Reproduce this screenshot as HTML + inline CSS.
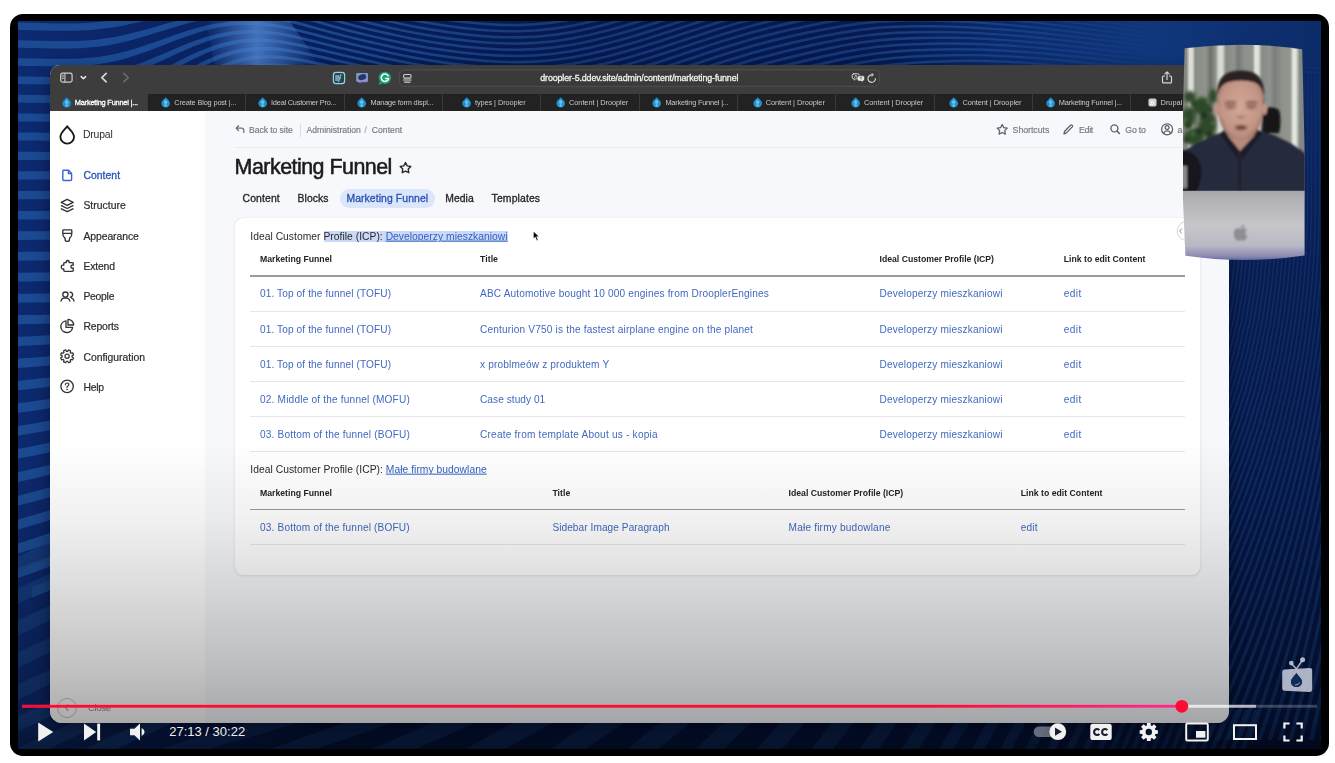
<!DOCTYPE html>
<html lang="en">
<head>
<meta charset="utf-8">
<title>Marketing Funnel | Droopler - video player</title>
<style>
*{box-sizing:border-box;margin:0;padding:0}
html,body{width:1335px;height:763px;overflow:hidden;background:#fff}
body{position:relative;font-family:"Liberation Sans",sans-serif;color:#222;-webkit-font-smoothing:antialiased}
.abs{position:absolute}
.pg{position:absolute;width:1335px;height:763px}
.t{position:absolute;white-space:nowrap;line-height:1;transform:translateY(calc(-50% + .8px))}
a{color:inherit;text-decoration:none}
#player{position:absolute;left:10px;top:14px;width:1319px;height:742px;background:#000;border-radius:13px;overflow:hidden}
#video{position:absolute;left:8px;top:6.5px;width:1303px;height:728.5px;overflow:hidden;background:#0a2463}
#video>.pg{left:-18px;top:-20.5px}
#browser{filter:blur(.35px);position:absolute;left:50px;top:65px;width:1179px;height:658.4px;box-shadow:0 6px 16px rgba(0,0,10,.45);border-radius:10px 10px 12px 12px;overflow:hidden;background:#fafafd}
#browser>.pg{left:-50px;top:-65px}
#toolbar{left:50px;top:65px;width:1179px;height:29px;background:#3d3d3d}
#tabs{left:48.7px;top:93.5px;width:1182px;height:17.7px;background:#222;display:flex;padding-left:0}
.tab{width:98.35px;height:17.7px;flex:none;display:flex;align-items:center;justify-content:center;color:#c9c9c9;font-size:7.4px;font-weight:400;border-left:1px solid #3a3a3a;white-space:nowrap;padding-left:4px}
.tab.on{background:#3d3d3d;color:#fff;-webkit-text-stroke:.3px #fff;border-left:none}
.tab svg{width:9.4px;height:10.6px;margin-right:3.6px;flex:none}
#side{left:50px;top:111px;width:155px;height:612px;background:#fff}
#main{left:205px;top:111px;width:1024px;height:612px;background:#f7f8fc}
.nav{font-size:10.4px;color:#2b2b2b;left:83.4px;-webkit-text-stroke:.2px #2b2b2b}
.nav.on{color:#2a55b8;-webkit-text-stroke:.3px #2a55b8}
.crumb{font-size:8.6px;color:#75777e;-webkit-text-stroke:.15px #75777e}
.tool{font-size:8.8px;color:#75777e;-webkit-text-stroke:.15px #75777e}
h1.t{font-size:21.4px;font-weight:400;color:#1b1b1d;-webkit-text-stroke:0.55px #1b1b1d}
.ltab{font-size:10.4px;color:#1f1f22;-webkit-text-stroke:0.3px #1f1f22}
.ltab.on{color:#2a50b4;-webkit-text-stroke:0.3px #2a50b4}
#pill{left:339.6px;top:188.5px;width:95px;height:19.3px;border-radius:10px;background:#dbe6fb}
#card{left:235px;top:218px;width:965px;height:357px;border-radius:8px;background:#fff;box-shadow:0 1px 3px rgba(30,30,60,.10),0 0 1px rgba(30,30,60,.15)}
.cap{font-size:10.3px;color:#2a2a2d}
.cap a{color:#3362c4;text-decoration:underline}
.th{font-size:8.7px;font-weight:700;color:#232326}
.td{font-size:10.1px;color:#4169c0}
.hl{position:absolute;height:1.5px;background:#9b9b9e}
.rl{position:absolute;height:1px;background:#e6e6ea}
#shade{left:18px;top:440px;width:1303px;height:309px;background:linear-gradient(to bottom,rgba(0,0,0,0) 0%,rgba(0,0,0,.055) 25%,rgba(0,0,0,.145) 50%,rgba(0,0,0,.245) 75%,rgba(0,0,0,.33) 91%,rgba(0,0,0,.52) 100%)}
#time{font-size:13px;color:#eee;left:169.2px;top:731px}
#r00{letter-spacing:0.110px}
#r01{letter-spacing:0.158px}
#r02{letter-spacing:0.173px}
#r03{letter-spacing:0.430px}
#r10{letter-spacing:0.110px}
#r11{letter-spacing:0.176px}
#r12{letter-spacing:0.173px}
#r13{letter-spacing:0.430px}
#r20{letter-spacing:0.110px}
#r21{letter-spacing:0.175px}
#r22{letter-spacing:0.173px}
#r23{letter-spacing:0.430px}
#r30{letter-spacing:0.188px}
#r31{letter-spacing:0.059px}
#r32{letter-spacing:0.173px}
#r33{letter-spacing:0.430px}
#r40{letter-spacing:0.169px}
#r41{letter-spacing:0.211px}
#r42{letter-spacing:0.173px}
#r43{letter-spacing:0.430px}
#tb0{letter-spacing:-0.202px}
#tb1{letter-spacing:-0.161px}
#tb2{letter-spacing:-0.231px}
#tb3{letter-spacing:-0.203px}
#tb4{letter-spacing:-0.090px}
#tb5{letter-spacing:-0.065px}
#tb6{letter-spacing:-0.202px}
#tb7{letter-spacing:-0.065px}
#tb8{letter-spacing:-0.065px}
#tb9{letter-spacing:-0.065px}
#tb10{letter-spacing:-0.202px}
#brand{letter-spacing:-0.185px}
#n0{letter-spacing:0.042px}
#n1{letter-spacing:0.027px}
#n2{letter-spacing:-0.065px}
#n3{letter-spacing:-0.143px}
#n4{letter-spacing:-0.260px}
#n5{letter-spacing:-0.142px}
#n6{letter-spacing:-0.016px}
#n7{letter-spacing:-0.269px}
#c0{letter-spacing:-0.060px}
#c1{letter-spacing:-0.018px}
#c2{letter-spacing:0.042px}
#s0{letter-spacing:-0.052px}
#s1{letter-spacing:-0.293px}
#s2{letter-spacing:-0.203px}
#h1{letter-spacing:-0.499px}
#l0{letter-spacing:0.142px}
#l1{letter-spacing:0.065px}
#l2{letter-spacing:0.095px}
#l3{letter-spacing:0.037px}
#l4{letter-spacing:0.138px}
#cap1{letter-spacing:0.028px}
#cap2{letter-spacing:0.035px}
#h10{letter-spacing:-0.001px}
#h11{letter-spacing:0.059px}
#h12{letter-spacing:-0.014px}
#h13{letter-spacing:0.012px}
#h20{letter-spacing:-0.001px}
#h21{letter-spacing:0.059px}
#h22{letter-spacing:-0.014px}
#h23{letter-spacing:0.012px}
#r50{letter-spacing:0.163px}
#r51{letter-spacing:0.070px}
#r52{letter-spacing:0.186px}
#r53{letter-spacing:0.230px}
#url{letter-spacing:-0.129px}
#time{letter-spacing:0.007px}
#cls{letter-spacing:-0.346px}
</style>
</head>
<body>
<div id="player">
 <div id="video"><div class="pg">
  <svg class="abs" style="left:18px;top:20px" width="1303" height="730" viewBox="18 20 1303 730"><defs><linearGradient id="bgv" x1="0" y1="0" x2="0" y2="1"><stop offset="0" stop-color="#081f5c"/><stop offset=".5" stop-color="#081c52"/><stop offset="1" stop-color="#051440"/></linearGradient><linearGradient id="rbase" x1="0" y1="0" x2="0" y2="1"><stop offset="0" stop-color="#0d2c6c" stop-opacity="0"/><stop offset=".09" stop-color="#0c2868" stop-opacity="1"/><stop offset=".35" stop-color="#081c50"/><stop offset="1" stop-color="#04123a"/></linearGradient><linearGradient id="lbase" x1="0" y1="0" x2="1" y2="0"><stop offset="0" stop-color="#0e2b72" stop-opacity=".9"/><stop offset=".25" stop-color="#0e2b72" stop-opacity=".6"/><stop offset="1" stop-color="#0e2b72" stop-opacity="0"/></linearGradient><linearGradient id="mdark" x1="0" y1="0" x2="1" y2="0"><stop offset="0" stop-color="#020a30" stop-opacity="0"/><stop offset=".4" stop-color="#020a30" stop-opacity=".28"/><stop offset=".8" stop-color="#020a30" stop-opacity=".28"/><stop offset="1" stop-color="#020a30" stop-opacity="0"/></linearGradient><linearGradient id="sheen" x1="0" y1="0" x2="1" y2="0"><stop offset="0" stop-color="#4c80cc" stop-opacity="0"/><stop offset=".45" stop-color="#4c80cc" stop-opacity=".85"/><stop offset="1" stop-color="#4c80cc" stop-opacity="0"/></linearGradient><linearGradient id="rfade" x1="0" y1="0" x2="1" y2="0"><stop offset="0" stop-color="#10357a" stop-opacity="0"/><stop offset=".5" stop-color="#10357a" stop-opacity="0"/><stop offset=".66" stop-color="#10357a" stop-opacity=".6"/><stop offset=".8" stop-color="#10377c" stop-opacity=".97"/><stop offset="1" stop-color="#0c2b6a" stop-opacity="1"/></linearGradient></defs><rect x="18" y="20" width="1303" height="730" fill="url(#bgv)"/><rect x="18" y="20" width="300" height="730" fill="url(#lbase)"/><path fill="#1b4a92" d="M14,-173 20,-172.8 26,-172.6 32,-172.4 38,-172.1 44,-171.7 50,-171.4 56,-171.1 62,-170.8 62,-163.4 56,-163.7 50,-164 44,-164.3 38,-164.6 32,-164.9 26,-165.2 20,-165.4 14,-165.5ZM14,-155.2 20,-155.1 26,-154.9 32,-154.6 38,-154.3 44,-154 50,-153.7 56,-153.4 62,-153.1 62,-145.7 56,-146 50,-146.3 44,-146.6 38,-146.9 32,-147.2 26,-147.4 20,-147.6 14,-147.7ZM14,-137.4 20,-137.3 26,-137.1 32,-136.9 38,-136.6 44,-136.3 50,-136 56,-135.7 62,-135.5 62,-128.1 56,-128.3 50,-128.6 44,-128.9 38,-129.2 32,-129.4 26,-129.6 20,-129.8 14,-130ZM14,-119.7 20,-119.5 26,-119.3 32,-119.1 38,-118.9 44,-118.6 50,-118.3 56,-118 62,-117.8 62,-110.4 56,-110.6 50,-110.9 44,-111.2 38,-111.4 32,-111.7 26,-111.9 20,-112.1 14,-112.2ZM14,-101.9 20,-101.8 26,-101.6 32,-101.4 38,-101.2 44,-100.9 50,-100.6 56,-100.4 62,-100.2 62,-92.8 56,-93 50,-93.2 44,-93.4 38,-93.7 32,-93.9 26,-94.1 20,-94.3 14,-94.4ZM500,11.3 518,11.5 524,11.3 524,13.9 518,14.1 500,13.9ZM14,-84.1 20,-84 26,-83.8 32,-83.6 38,-83.4 44,-83.2 50,-82.9 56,-82.7 62,-82.5 62,-75.1 56,-75.3 50,-75.5 44,-75.7 38,-76 32,-76.2 26,-76.4 20,-76.5 14,-76.7ZM440,11.2 446,12.1 464,14.5 482,16.4 500,17.5 518,17.6 536,16.7 554,14.7 572,11.8 578,10.5 578,13.2 572,14.4 554,17.4 536,19.3 518,20.2 500,20.1 482,19 464,17.1 446,14.7 440,13.8ZM14,-66.4 20,-66.2 26,-66.1 32,-65.9 38,-65.7 44,-65.5 50,-65.2 56,-65 62,-64.9 62,-57.4 56,-57.6 50,-57.8 44,-58 38,-58.3 32,-58.5 26,-58.6 20,-58.8 14,-58.9ZM404,10.8 410,12 428,15.4 446,18.3 464,20.7 482,22.5 500,23.6 518,23.8 536,22.9 554,21 572,18.1 590,14.2 602,11.2 602,13.9 590,16.9 572,20.8 554,23.7 536,25.6 518,26.4 500,26.2 482,25.1 464,23.3 446,20.9 428,18 410,14.6 404,13.4ZM14,-48.6 20,-48.5 26,-48.3 32,-48.2 38,-48 44,-47.7 50,-47.5 56,-47.3 62,-47.2 62,-39.8 56,-39.9 50,-40.1 44,-40.3 38,-40.5 32,-40.7 26,-40.9 20,-41 14,-41.1ZM374,10.3 380,11.7 386,13.1 392,14.4 398,15.7 410,18.2 428,21.6 446,24.5 464,26.8 482,28.7 500,29.8 518,30 536,29.2 554,27.3 572,24.4 590,20.6 608,16.1 626,10.9 626,13.7 608,18.8 590,23.3 572,27.1 554,29.9 536,31.8 518,32.6 500,32.3 482,31.2 464,29.4 446,27.1 428,24.2 410,20.9 398,18.4 392,17.1 386,15.7 380,14.3 374,12.9ZM1286,12.4 1292,13.1 1310,15.1 1328,16.3 1328,17.7 1310,16.6 1292,14.6 1286,13.9ZM14,-30.8 20,-30.7 26,-30.6 32,-30.4 38,-30.2 44,-30 50,-29.8 56,-29.7 62,-29.5 62,-22.1 56,-22.2 50,-22.4 44,-22.6 38,-22.8 32,-23 26,-23.1 20,-23.2 14,-23.3ZM350,10.4 356,12.1 362,13.6 368,15.1 374,16.6 380,18 386,19.3 392,20.7 398,22 410,24.5 428,27.8 446,30.6 464,33 482,34.8 500,35.9 518,36.1 536,35.4 554,33.6 572,30.8 590,27 608,22.5 626,17.4 644,12 650,10.2 650,12.9 644,14.8 626,20.2 608,25.2 590,29.7 572,33.4 554,36.2 536,38 518,38.7 500,38.5 482,37.4 464,35.6 446,33.2 428,30.4 410,27.1 398,24.6 392,23.3 386,22 380,20.6 374,19.2 368,17.7 362,16.3 356,14.7 350,13.1ZM1256,12.2 1274,14.5 1292,16.7 1310,18.6 1328,19.8 1328,21.3 1310,20.1 1292,18.2 1274,16 1256,13.7ZM14,-13 20,-12.9 26,-12.8 32,-12.7 38,-12.5 44,-12.3 50,-12.1 56,-12 62,-11.9 62,-4.5 56,-4.6 50,-4.7 44,-4.9 38,-5.1 32,-5.2 26,-5.4 20,-5.5 14,-5.6ZM326,9.8 332,11.6 338,13.4 344,15.2 350,16.8 356,18.4 362,19.9 368,21.4 374,22.8 380,24.2 386,25.6 392,26.9 398,28.2 410,30.7 428,34 446,36.8 464,39.1 482,40.9 500,42.1 518,42.3 536,41.6 554,39.9 572,37.1 590,33.4 608,29 626,24 644,18.6 662,12.9 668,11 668,13.8 662,15.7 644,21.3 626,26.7 608,31.7 590,36.1 572,39.8 554,42.5 536,44.2 518,44.9 500,44.6 482,43.5 464,41.7 446,39.4 428,36.6 410,33.3 398,30.8 392,29.5 386,28.2 380,26.8 374,25.5 368,24 362,22.6 356,21 350,19.5 344,17.9 338,16.2 332,14.4 326,12.6ZM1226,12.2 1238,13.7 1256,15.9 1274,18.2 1292,20.3 1310,22.2 1328,23.3 1328,24.8 1310,23.7 1292,21.8 1274,19.7 1256,17.5 1238,15.3 1226,13.8ZM14,4.7 20,4.8 26,4.9 32,5.1 38,5.2 44,5.4 50,5.5 56,5.7 62,5.8 62,13.2 56,13.1 50,13 44,12.8 38,12.7 32,12.5 26,12.4 20,12.3 14,12.2ZM308,10.9 314,12.7 320,14.5 326,16.4 332,18.2 338,19.9 344,21.6 350,23.2 356,24.7 362,26.2 368,27.7 374,29.1 380,30.5 386,31.8 392,33.1 398,34.4 410,36.9 428,40.2 446,43 464,45.3 482,47.1 500,48.2 518,48.5 536,47.8 554,46.1 572,43.5 590,39.8 608,35.4 626,30.5 644,25.1 662,19.5 680,13.7 692,9.9 692,12.6 680,16.4 662,22.2 644,27.9 626,33.2 608,38.1 590,42.5 572,46.1 554,48.8 536,50.4 518,51.1 500,50.8 482,49.6 464,47.9 446,45.6 428,42.8 410,39.5 398,37 392,35.8 386,34.4 380,33.1 374,31.7 368,30.3 362,28.9 356,27.4 350,25.8 344,24.3 338,22.6 332,20.9 326,19.1 320,17.3 314,15.5 308,13.7ZM1190,11.7 1202,13.1 1220,15.3 1238,17.5 1256,19.6 1274,21.8 1292,23.9 1310,25.7 1328,26.9 1328,28.3 1310,27.2 1292,25.5 1274,23.4 1256,21.2 1238,19.1 1220,16.9 1202,14.8 1190,13.3ZM14,22.5 20,22.6 26,22.7 32,22.8 38,22.9 44,23.1 50,23.2 56,23.4 62,23.4 68,23.4 74,23.4 80,23.2 86,23 92,22.6 98,22.1 104,21.4 110,20.6 116,19.8 122,18.8 128,17.7 134,16.5 140,15.2 146,13.9 152,12.6 158,11.3 164,10 170,8.7 176,7.6 176,13.2 170,14.6 164,16 158,17.5 152,18.9 146,20.4 140,21.9 134,23.3 128,24.6 122,25.8 116,26.9 110,27.8 104,28.6 98,29.3 92,29.9 86,30.3 80,30.6 74,30.8 68,30.8 62,30.8 56,30.8 50,30.7 44,30.5 38,30.4 32,30.3 26,30.1 20,30 14,30ZM278,9.7 284,11.1 290,12.7 296,14.3 302,16 308,17.7 314,19.4 320,21.2 326,22.9 332,24.7 338,26.3 344,28 350,29.5 356,31 362,32.5 368,33.9 374,35.4 380,36.7 386,38.1 392,39.4 398,40.7 410,43.1 428,46.4 446,49.1 464,51.4 482,53.2 500,54.3 518,54.7 536,54.1 554,52.4 572,49.8 590,46.2 608,41.9 626,37 644,31.6 662,26 680,20.2 698,14.5 710,10.7 710,13.4 698,17.2 680,23 662,28.8 644,34.4 626,39.7 608,44.6 590,48.9 572,52.5 554,55.1 536,56.7 518,57.3 500,56.9 482,55.8 464,54 446,51.7 428,49 410,45.7 398,43.3 392,42 386,40.7 380,39.3 374,38 368,36.6 362,35.2 356,33.7 350,32.2 344,30.7 338,29.1 332,27.4 326,25.7 320,24 314,22.3 308,20.6 302,18.9 296,17.2 290,15.7 284,14.2 278,12.8ZM1160,11.9 1166,12.7 1184,14.9 1202,17 1220,19.1 1238,21.3 1256,23.4 1274,25.5 1292,27.6 1310,29.3 1328,30.4 1328,31.9 1310,30.8 1292,29.1 1274,27 1256,24.9 1238,22.9 1220,20.8 1202,18.7 1184,16.6 1166,14.4 1160,13.6ZM14,40.3 20,40.3 26,40.4 32,40.5 38,40.7 44,40.8 50,40.9 56,41 62,41.1 68,41.1 74,41 80,40.8 86,40.5 92,40 98,39.4 104,38.6 110,37.7 116,36.7 122,35.5 128,34.1 134,32.6 140,31.1 146,29.4 152,27.7 158,26 164,24.3 170,22.6 176,21 182,19.5 188,18 194,16.7 200,15.5 206,14.4 212,13.6 218,13 224,12.5 230,12.3 236,12.2 242,12.4 248,12.7 254,13.3 260,14 266,14.9 272,15.9 278,17.1 284,18.4 290,19.8 296,21.3 302,22.9 308,24.5 314,26.2 320,27.9 326,29.5 332,31.2 338,32.8 344,34.4 350,35.9 356,37.4 362,38.8 368,40.2 374,41.6 380,43 386,44.3 392,45.6 398,46.9 410,49.3 428,52.6 446,55.3 464,57.6 482,59.3 500,60.5 518,60.8 536,60.3 554,58.7 572,56.1 590,52.6 608,48.3 626,43.5 644,38.2 662,32.6 680,26.7 698,20.9 716,15.3 734,9.9 734,12.6 716,18 698,23.7 680,29.5 662,35.3 644,40.9 626,46.2 608,51.1 590,55.3 572,58.8 554,61.3 536,62.9 518,63.4 500,63.1 482,61.9 464,60.2 446,57.9 428,55.2 410,51.9 398,49.5 392,48.2 386,46.9 380,45.6 374,44.2 368,42.9 362,41.5 356,40 350,38.6 344,37.1 338,35.5 332,33.9 326,32.3 320,30.7 314,29 308,27.4 302,25.8 296,24.3 290,22.8 284,21.4 278,20.2 272,19.1 266,18.2 260,17.4 254,16.7 248,16.3 242,16.1 236,16 230,16.2 224,16.6 218,17.3 212,18.1 206,19.1 200,20.3 194,21.7 188,23.2 182,24.9 176,26.7 170,28.5 164,30.4 158,32.2 152,34.1 146,36 140,37.7 134,39.4 128,41 122,42.5 116,43.8 110,44.9 104,45.9 98,46.7 92,47.3 86,47.8 80,48.2 74,48.4 68,48.5 62,48.5 56,48.5 50,48.4 44,48.2 38,48.1 32,48 26,47.9 20,47.8 14,47.7ZM1130,11.9 1148,14.4 1166,16.7 1184,18.9 1202,20.9 1220,23 1238,25.1 1256,27.1 1274,29.2 1292,31.2 1310,32.9 1328,33.9 1328,35.4 1310,34.4 1292,32.7 1274,30.7 1256,28.7 1238,26.7 1220,24.6 1202,22.6 1184,20.5 1166,18.4 1148,16.1 1130,13.7ZM14,58.2 20,58.2 26,58.3 32,58.4 38,58.5 44,58.7 50,58.8 56,58.8 62,58.9 68,58.8 74,58.7 80,58.5 86,58.1 92,57.6 98,56.9 104,56 110,54.9 116,53.7 122,52.3 128,50.7 134,48.9 140,47.1 146,45.1 152,43 158,40.9 164,38.8 170,36.7 176,34.6 182,32.5 188,30.6 194,28.8 200,27.1 206,25.6 212,24.3 218,23.3 224,22.4 230,21.8 236,21.4 242,21.2 248,21.3 254,21.6 260,22.1 266,22.7 272,23.6 278,24.6 284,25.7 290,27 296,28.4 302,29.9 308,31.4 314,33 320,34.6 326,36.2 332,37.7 338,39.3 344,40.8 350,42.3 356,43.7 362,45.2 368,46.6 374,47.9 380,49.3 386,50.6 392,51.9 398,53.2 410,55.6 428,58.8 446,61.5 464,63.8 482,65.5 500,66.7 518,67.1 536,66.5 554,65 572,62.5 590,59.1 608,54.9 626,50 644,44.8 662,39.1 680,33.3 698,27.5 716,21.8 734,16.4 752,11.3 758,9.8 758,12.4 752,14 734,19.1 716,24.5 698,30.2 680,36.1 662,41.9 644,47.6 626,52.8 608,57.6 590,61.8 572,65.2 554,67.7 536,69.2 518,69.7 500,69.3 482,68.1 464,66.4 446,64.2 428,61.4 410,58.2 398,55.8 392,54.5 386,53.3 380,51.9 374,50.6 368,49.2 362,47.8 356,46.4 350,45 344,43.5 338,42.1 332,40.5 326,39 320,37.4 314,35.8 308,34.3 302,32.8 296,31.4 290,30 284,28.8 278,27.7 272,26.8 266,26 260,25.4 254,25.1 248,24.9 242,25 236,25.3 230,25.8 224,26.6 218,27.6 212,28.9 206,30.3 200,32 194,33.9 188,35.9 182,38.1 176,40.3 170,42.6 164,44.9 158,47.2 152,49.5 146,51.7 140,53.8 134,55.8 128,57.7 122,59.4 116,60.9 110,62.2 104,63.3 98,64.3 92,65 86,65.6 80,66 74,66.2 68,66.3 62,66.4 56,66.4 50,66.3 44,66.2 38,66.1 32,66 26,65.9 20,65.8 14,65.8ZM1100,11.8 1112,13.5 1130,16.1 1148,18.5 1166,20.8 1184,22.9 1202,24.9 1220,26.9 1238,28.9 1256,30.9 1274,32.9 1292,34.8 1310,36.5 1328,37.5 1328,39 1310,38 1292,36.4 1274,34.4 1256,32.5 1238,30.5 1220,28.5 1202,26.6 1184,24.6 1166,22.5 1148,20.3 1130,17.9 1112,15.3 1100,13.6ZM14,76.3 20,76.4 26,76.5 32,76.6 38,76.7 44,76.8 50,76.9 56,76.9 62,76.9 62,84.6 56,84.6 50,84.5 44,84.4 38,84.3 32,84.2 26,84.2 20,84.1 14,84ZM110,72.4 116,71 122,69.3 128,67.5 134,65.5 140,63.3 146,61 152,58.6 158,56 164,53.5 170,50.9 176,48.3 182,45.8 188,43.4 194,41.1 200,38.9 206,37 212,35.2 218,33.7 224,32.5 230,31.4 236,30.7 242,30.2 248,30 254,30 260,30.2 266,30.7 272,31.3 278,32.1 284,33.1 290,34.3 296,35.6 302,36.9 308,38.4 314,39.9 320,41.4 326,42.9 332,44.4 338,45.9 344,47.4 350,48.8 356,50.2 362,51.6 368,53 374,54.3 380,55.7 386,57 392,58.3 398,59.5 410,61.9 428,65.1 446,67.8 464,70 482,71.8 488,72.2 488,74.9 482,74.4 464,72.7 446,70.5 428,67.8 410,64.6 398,62.2 392,61 386,59.7 380,58.4 374,57 368,55.7 362,54.3 356,52.9 350,51.5 344,50.1 338,48.7 332,47.2 326,45.7 320,44.3 314,42.8 308,41.3 302,39.9 296,38.6 290,37.4 284,36.3 278,35.3 272,34.6 266,34 260,33.7 254,33.5 248,33.6 242,34 236,34.6 230,35.5 224,36.7 218,38.1 212,39.8 206,41.8 200,43.9 194,46.3 188,48.8 182,51.4 176,54.1 170,56.9 164,59.7 158,62.4 152,65.1 146,67.7 140,70.2 134,72.5 128,74.6 122,76.6 116,78.3 110,79.8ZM548,72 554,71.5 572,69 590,65.6 608,61.5 626,56.7 644,51.5 662,45.8 680,40 698,34.1 716,28.3 734,22.9 752,17.8 770,13.2 782,10.5 782,13.2 770,15.9 752,20.5 734,25.6 716,31.1 698,36.9 680,42.8 662,48.7 644,54.3 626,59.5 608,64.3 590,68.4 572,71.7 554,74.2 548,74.8ZM1070,11.9 1076,12.8 1094,15.3 1112,17.9 1130,20.4 1148,22.7 1166,24.9 1184,26.9 1202,28.9 1220,30.8 1238,32.8 1256,34.7 1274,36.6 1292,38.5 1310,40.1 1328,41.1 1328,42.6 1310,41.6 1292,40.1 1274,38.2 1256,36.3 1238,34.4 1220,32.5 1202,30.6 1184,28.7 1166,26.7 1148,24.5 1130,22.2 1112,19.7 1094,17.1 1076,14.6 1070,13.8ZM14,94.8 20,94.8 26,94.9 32,95 38,95 44,95.1 50,95.2 56,95.2 62,95.2 62,103 56,103 50,103 44,102.9 38,102.8 32,102.8 26,102.7 20,102.6 14,102.6ZM152,74.3 158,71.4 164,68.4 170,65.3 176,62.3 182,59.3 188,56.3 194,53.5 200,50.9 206,48.5 212,46.3 218,44.3 224,42.6 230,41.2 236,40.1 242,39.3 248,38.8 254,38.5 260,38.5 266,38.7 272,39.2 278,39.8 284,40.7 290,41.7 296,42.9 302,44.1 308,45.5 314,46.9 320,48.3 326,49.7 332,51.2 338,52.6 344,54 350,55.4 356,56.8 362,58.1 368,59.5 374,60.8 380,62.2 386,63.5 392,64.7 398,66 410,68.4 428,71.5 434,72.5 434,75.2 428,74.3 410,71.1 398,68.7 392,67.5 386,66.2 380,64.9 374,63.6 368,62.2 362,60.9 356,59.6 350,58.2 344,56.8 338,55.4 332,54 326,52.6 320,51.2 314,49.8 308,48.5 302,47.2 296,46 290,44.9 284,43.9 278,43.1 272,42.5 266,42.1 260,42 254,42.1 248,42.5 242,43.1 236,44.1 230,45.4 224,46.9 218,48.8 212,50.9 206,53.3 200,56 194,58.8 188,61.8 182,65 176,68.2 170,71.4 164,74.7 158,77.9 152,81ZM590,72.3 608,68.2 626,63.5 644,58.3 662,52.6 680,46.7 698,40.8 716,35 734,29.5 752,24.4 770,19.7 788,15.6 806,11.9 812,10.8 812,13.5 806,14.6 788,18.3 770,22.5 752,27.1 734,32.3 716,37.8 698,43.6 680,49.6 662,55.5 644,61.1 626,66.3 608,71 590,75.1ZM1034,11.9 1040,12.6 1058,14.9 1076,17.3 1094,19.7 1112,22.2 1130,24.7 1148,27 1166,29.1 1184,31.1 1202,33 1220,34.8 1238,36.7 1256,38.6 1274,40.4 1292,42.3 1310,43.8 1328,44.8 1328,46.3 1310,45.4 1292,43.8 1274,42 1256,40.2 1238,38.4 1220,36.5 1202,34.7 1184,32.8 1166,30.9 1148,28.8 1130,26.5 1112,24.1 1094,21.6 1076,19.2 1058,16.8 1040,14.6 1034,13.9ZM14,113.5 20,113.5 26,113.6 32,113.6 38,113.7 44,113.8 50,113.8 56,113.9 62,113.8 62,121.7 56,121.7 50,121.7 44,121.7 38,121.6 32,121.5 26,121.5 20,121.4 14,121.4ZM182,72.9 188,69.5 194,66.2 200,63.1 206,60.1 212,57.5 218,55.1 224,53 230,51.2 236,49.7 242,48.5 248,47.7 254,47.1 260,46.9 266,46.9 272,47.1 278,47.6 284,48.3 290,49.2 296,50.3 302,51.4 308,52.7 314,54 320,55.3 326,56.6 332,58 338,59.4 344,60.7 350,62.1 356,63.4 362,64.8 368,66.1 374,67.4 380,68.7 386,70 392,71.3 398,72.5 398,75.3 392,74.1 386,72.8 380,71.5 374,70.2 368,68.9 362,67.6 356,66.2 350,64.9 344,63.6 338,62.3 332,60.9 326,59.6 320,58.3 314,57 308,55.7 302,54.5 296,53.4 290,52.4 284,51.6 278,50.9 272,50.5 266,50.3 260,50.4 254,50.8 248,51.4 242,52.4 236,53.7 230,55.4 224,57.3 218,59.6 212,62.2 206,65.1 200,68.2 194,71.5 188,75.1 182,78.7ZM614,73.5 626,70.3 644,65.1 662,59.5 680,53.6 698,47.6 716,41.8 734,36.2 752,31 770,26.3 788,22.1 806,18.4 824,15 842,12.2 848,11.4 848,13.9 842,14.8 824,17.7 806,21.1 788,24.9 770,29.1 752,33.8 734,39 716,44.6 698,50.5 680,56.5 662,62.4 644,68.1 626,73.2 614,76.4ZM986,11.8 1004,13.5 1022,15.4 1040,17.3 1058,19.5 1076,21.8 1094,24.2 1112,26.7 1130,29.1 1148,31.3 1166,33.4 1184,35.3 1202,37.1 1220,38.9 1238,40.7 1256,42.5 1274,44.3 1292,46.1 1310,47.6 1328,48.5 1328,50 1310,49.1 1292,47.7 1274,45.9 1256,44.2 1238,42.4 1220,40.6 1202,38.8 1184,37 1166,35.2 1148,33.1 1130,30.9 1112,28.6 1094,26.1 1076,23.8 1058,21.5 1040,19.3 1022,17.4 1004,15.6 986,13.9ZM14,132.5 20,132.5 26,132.5 32,132.6 38,132.6 44,132.7 50,132.7 56,132.7 62,132.7 62,140.6 56,140.7 50,140.7 44,140.7 38,140.6 32,140.6 26,140.5 20,140.5 14,140.5ZM200,75.4 206,72 212,68.8 218,66 224,63.5 230,61.2 236,59.4 242,57.9 248,56.7 254,55.9 260,55.4 266,55.2 272,55.2 278,55.6 284,56.1 290,56.9 296,57.8 302,58.8 308,59.9 314,61.2 320,62.4 326,63.7 332,65 338,66.3 344,67.6 350,68.9 356,70.2 362,71.5 368,72.8 368,75.6 362,74.3 356,73 350,71.8 344,70.5 338,69.2 332,67.9 326,66.6 320,65.4 314,64.2 308,63 302,61.9 296,60.9 290,60.1 284,59.4 278,58.9 272,58.6 266,58.7 260,59 254,59.6 248,60.5 242,61.8 236,63.5 230,65.5 224,67.9 218,70.6 212,73.6 206,77 200,80.6ZM644,72.1 662,66.5 680,60.5 698,54.5 716,48.6 734,43 752,37.8 770,33 788,28.8 806,24.9 824,21.4 842,18.4 860,16 878,14.4 896,13.6 914,13.5 932,13.8 950,14.5 968,15.5 986,16.9 1004,18.4 1022,20.2 1040,22.1 1058,24.2 1076,26.5 1094,28.8 1112,31.2 1130,33.5 1148,35.7 1166,37.7 1184,39.5 1202,41.3 1220,43 1238,44.7 1256,46.5 1274,48.2 1292,49.9 1310,51.4 1328,52.2 1328,53.8 1310,53 1292,51.5 1274,49.9 1256,48.2 1238,46.5 1220,44.7 1202,43 1184,41.3 1166,39.5 1148,37.5 1130,35.4 1112,33.1 1094,30.7 1076,28.4 1058,26.2 1040,24.1 1022,22.2 1004,20.5 986,19 968,17.7 950,16.8 932,16.1 914,15.9 896,16 878,16.9 860,18.6 842,21.1 824,24.1 806,27.7 788,31.6 770,35.9 752,40.6 734,45.9 716,51.5 698,57.4 680,63.5 662,69.4 644,75.1ZM14,151.7 20,151.7 26,151.8 32,151.8 38,151.8 44,151.9 50,151.9 56,151.9 62,151.8 62,159.9 56,159.9 50,160 44,160 38,159.9 32,159.9 26,159.9 20,159.9 14,159.8ZM224,74.1 230,71.5 236,69.2 242,67.4 248,65.9 254,64.8 260,64 266,63.6 272,63.4 278,63.6 284,64 290,64.6 296,65.4 302,66.3 308,67.3 314,68.4 320,69.6 326,70.8 332,72 332,75 326,73.8 320,72.7 314,71.5 308,70.5 302,69.5 296,68.6 290,67.9 284,67.3 278,67 272,66.9 266,67.1 260,67.6 254,68.5 248,69.8 242,71.4 236,73.4 230,75.8 224,78.6ZM662,73.6 680,67.6 698,61.5 716,55.6 734,49.9 752,44.6 770,39.8 788,35.5 806,31.5 824,27.9 842,24.8 860,22.2 878,20.4 896,19.5 914,19.2 932,19.4 950,19.9 968,20.8 986,22 1004,23.4 1022,25.1 1040,26.9 1058,29 1076,31.2 1094,33.4 1112,35.8 1130,38 1148,40.1 1166,42 1184,43.8 1202,45.5 1220,47.2 1238,48.8 1256,50.5 1274,52.2 1292,53.8 1310,55.2 1328,56.1 1328,57.7 1310,56.8 1292,55.5 1274,53.9 1256,52.2 1238,50.6 1220,48.9 1202,47.3 1184,45.6 1166,43.9 1148,42 1130,39.9 1112,37.7 1094,35.4 1076,33.2 1058,31 1040,29 1022,27.2 1004,25.6 986,24.2 968,23 950,22.2 932,21.7 914,21.6 896,21.9 878,23 860,24.8 842,27.5 824,30.7 806,34.3 788,38.3 770,42.7 752,47.5 734,52.8 716,58.5 698,64.5 680,70.6 662,76.6ZM14,171.2 20,171.2 26,171.2 32,171.3 38,171.3 44,171.3 50,171.3 56,171.3 62,171.2 62,179.4 56,179.5 50,179.5 44,179.5 38,179.5 32,179.5 26,179.5 20,179.5 14,179.5ZM266,72.1 272,71.7 278,71.7 284,72 290,72.4 290,75.8 284,75.3 278,75.2 272,75.3 266,75.7ZM686,72.7 698,68.6 716,62.6 734,56.9 752,51.6 770,46.7 788,42.3 806,38.2 824,34.5 842,31.2 860,28.5 878,26.5 896,25.4 914,25 932,25 950,25.4 968,26.1 986,27.2 1004,28.5 1022,30.1 1040,31.8 1058,33.8 1076,35.9 1094,38.1 1112,40.4 1130,42.6 1148,44.6 1166,46.5 1184,48.2 1202,49.8 1220,51.4 1238,53 1256,54.6 1274,56.2 1292,57.8 1310,59.1 1328,59.9 1328,61.6 1310,60.8 1292,59.5 1274,57.9 1256,56.4 1238,54.8 1220,53.2 1202,51.6 1184,50 1166,48.3 1148,46.5 1130,44.5 1112,42.3 1094,40.1 1076,37.9 1058,35.9 1040,33.9 1022,32.2 1004,30.7 986,29.4 968,28.4 950,27.7 932,27.4 914,27.4 896,27.9 878,29.1 860,31.2 842,33.9 824,37.3 806,41.1 788,45.2 770,49.6 752,54.5 734,59.9 716,65.6 698,71.6 686,75.7ZM14,191 20,191 26,191 32,191 38,191 44,191 50,191 56,190.9 62,190.8 62,199.1 56,199.2 50,199.3 44,199.3 38,199.3 32,199.3 26,199.3 20,199.3 14,199.3ZM704,73.8 716,69.8 734,64 752,58.6 770,53.7 788,49.2 806,45.1 824,41.2 842,37.7 860,34.9 878,32.7 896,31.5 914,30.9 932,30.8 950,31 968,31.5 986,32.4 1004,33.7 1022,35.1 1040,36.8 1058,38.7 1076,40.8 1094,42.9 1112,45.1 1130,47.2 1148,49.2 1166,51 1184,52.6 1202,54.2 1220,55.7 1238,57.2 1256,58.8 1274,60.3 1292,61.8 1310,63.1 1328,63.9 1328,65.5 1310,64.8 1292,63.5 1274,62 1256,60.5 1238,59 1220,57.5 1202,56 1184,54.5 1166,52.9 1148,51.1 1130,49.2 1112,47.1 1094,44.9 1076,42.8 1058,40.8 1040,38.9 1022,37.3 1004,35.8 986,34.7 968,33.8 950,33.3 932,33.2 914,33.4 896,34 878,35.4 860,37.6 842,40.5 824,44 806,47.9 788,52.1 770,56.7 752,61.6 734,67 716,72.8 704,76.8ZM14,211 20,211 26,211 32,211 38,211 44,211 50,210.9 56,210.8 62,210.7 62,219.1 56,219.3 50,219.4 44,219.4 38,219.4 32,219.5 26,219.5 20,219.5 14,219.5ZM728,73.1 734,71.2 752,65.7 770,60.8 788,56.2 806,52 824,48 842,44.4 860,41.3 878,39 896,37.6 914,36.8 932,36.6 950,36.6 968,37 986,37.8 1004,38.9 1022,40.2 1040,41.8 1058,43.7 1076,45.7 1094,47.7 1112,49.8 1130,51.9 1148,53.8 1166,55.5 1184,57.1 1202,58.6 1220,60 1238,61.5 1256,63 1274,64.5 1292,65.9 1310,67.1 1328,67.9 1328,69.5 1310,68.8 1292,67.6 1274,66.2 1256,64.8 1238,63.3 1220,61.9 1202,60.4 1184,59 1166,57.4 1148,55.8 1130,53.9 1112,51.9 1094,49.8 1076,47.7 1058,45.8 1040,44 1022,42.4 1004,41.1 986,40 968,39.3 950,39 932,39 914,39.4 896,40.2 878,41.7 860,44 842,47.1 824,50.8 806,54.9 788,59.2 770,63.8 752,68.8 734,74.2 728,76.2ZM14,231.3 20,231.3 26,231.3 32,231.3 38,231.2 44,231.2 50,231.1 56,231 62,230.9 62,239.4 56,239.6 50,239.7 44,239.8 38,239.8 32,239.8 26,239.9 20,239.9 14,239.9ZM752,73 770,68 788,63.3 806,58.9 824,54.8 842,51.1 860,47.9 878,45.4 896,43.8 914,42.9 932,42.4 950,42.3 968,42.6 986,43.2 1004,44.1 1022,45.4 1040,46.9 1058,48.7 1076,50.6 1094,52.6 1112,54.7 1130,56.6 1148,58.5 1166,60.1 1184,61.6 1202,63 1220,64.4 1238,65.8 1256,67.2 1274,68.7 1292,70 1310,71.2 1328,71.9 1328,73.6 1310,72.9 1292,71.8 1274,70.4 1256,69.1 1238,67.7 1220,66.3 1202,64.9 1184,63.5 1166,62.1 1148,60.5 1130,58.6 1112,56.7 1094,54.7 1076,52.7 1058,50.8 1040,49.1 1022,47.6 1004,46.4 986,45.5 968,44.9 950,44.7 932,44.9 914,45.4 896,46.4 878,48.1 860,50.6 842,53.9 824,57.7 806,61.9 788,66.3 770,71 752,76ZM14,251.9 20,251.9 26,251.8 32,251.8 38,251.8 44,251.7 50,251.6 56,251.5 62,251.3 62,260 56,260.1 50,260.3 44,260.4 38,260.4 32,260.5 26,260.5 20,260.6 14,260.6ZM782,72 788,70.5 806,66 824,61.8 842,57.8 860,54.5 878,51.9 896,50.1 914,49 932,48.4 950,48.1 968,48.2 986,48.6 1004,49.5 1022,50.7 1040,52.1 1058,53.8 1076,55.6 1094,57.6 1112,59.6 1130,61.5 1148,63.2 1166,64.8 1184,66.2 1202,67.6 1220,68.9 1238,70.2 1256,71.6 1262,72 1262,73.8 1256,73.4 1238,72.1 1220,70.8 1202,69.5 1184,68.2 1166,66.8 1148,65.2 1130,63.5 1112,61.6 1094,59.7 1076,57.8 1058,56 1040,54.3 1022,52.9 1004,51.7 986,51 968,50.6 950,50.5 932,50.9 914,51.6 896,52.7 878,54.6 860,57.3 842,60.7 824,64.7 806,69 788,73.5 782,75.1ZM14,272.7 20,272.7 26,272.7 32,272.6 38,272.5 44,272.5 50,272.4 56,272.2 62,272 62,280.8 56,281 50,281.1 44,281.2 38,281.3 32,281.4 26,281.5 20,281.5 14,281.5ZM806,73.2 824,68.8 842,64.7 860,61.2 878,58.4 896,56.5 914,55.2 932,54.4 950,54 968,53.9 986,54.2 1004,54.9 1022,56 1040,57.4 1058,59 1076,60.7 1094,62.6 1112,64.5 1130,66.3 1148,68 1166,69.5 1184,70.9 1202,72.2 1202,74.1 1184,72.9 1166,71.5 1148,70.1 1130,68.4 1112,66.6 1094,64.7 1076,62.9 1058,61.1 1040,59.6 1022,58.2 1004,57.2 986,56.5 968,56.3 950,56.4 932,57 914,57.8 896,59.1 878,61.2 860,64 842,67.6 824,71.8 806,76.2ZM14,293.8 20,293.8 26,293.7 32,293.7 38,293.6 44,293.5 50,293.4 56,293.2 62,293 62,301.9 56,302.1 50,302.3 44,302.4 38,302.5 32,302.6 26,302.6 20,302.7 14,302.7ZM836,73 842,71.7 860,68 878,65 896,62.9 914,61.5 932,60.5 950,59.9 968,59.6 986,59.8 1004,60.4 1022,61.4 1040,62.7 1058,64.2 1076,65.9 1094,67.7 1112,69.5 1130,71.3 1142,72.4 1142,74.4 1130,73.4 1112,71.6 1094,69.8 1076,68.1 1058,66.4 1040,64.9 1022,63.6 1004,62.7 986,62.2 968,62.1 950,62.4 932,63.1 914,64.1 896,65.6 878,67.8 860,70.8 842,74.6 836,76ZM14,315.2 20,315.1 26,315.1 32,315 38,314.9 44,314.8 50,314.7 56,314.5 62,314.2 62,323.2 56,323.4 50,323.6 44,323.8 38,323.9 32,324 26,324.1 20,324.2 14,324.2ZM872,72.7 878,71.7 896,69.4 914,67.8 932,66.7 950,65.9 968,65.5 986,65.5 1004,65.9 1022,66.8 1040,68 1058,69.5 1076,71.1 1088,72.3 1088,74.4 1076,73.3 1058,71.7 1040,70.3 1022,69.1 1004,68.3 986,67.9 968,68 950,68.4 932,69.3 914,70.5 896,72.2 878,74.6 872,75.5ZM14,336.9 20,336.7 26,336.5 32,336.2 38,335.9 44,335.6 50,335.3 56,334.9 62,334.5 62,343.6 56,344 50,344.4 44,344.7 38,345.1 32,345.3 26,345.6 20,345.9 14,346.1ZM926,72.1 932,71.7 950,70.7 968,70.1 986,70 1004,70.3 1022,71.1 1040,72.2 1040,74.5 1022,73.4 1004,72.7 986,72.4 968,72.6 950,73.3 932,74.4 926,74.8ZM14,359 20,358.6 26,358.1 32,357.7 38,357.2 44,356.7 50,356.2 56,355.6 62,355 62,364.2 56,364.8 50,365.4 44,366 38,366.5 32,366.9 26,367.4 20,367.8 14,368.2ZM14,381.2 20,380.7 26,380.1 32,379.4 38,378.8 44,378.1 50,377.4 56,376.6 62,375.8 62,385.1 56,385.9 50,386.7 44,387.4 38,388.1 32,388.8 26,389.4 20,390 14,390.6ZM14,403.8 20,403 26,402.2 32,401.4 38,400.6 44,399.7 50,398.8 56,397.9 62,396.9 62,406.3 56,407.3 50,408.3 44,409.2 38,410.1 32,410.9 26,411.7 20,412.5 14,413.3ZM14,426.6 20,425.7 26,424.7 32,423.7 38,422.7 44,421.6 50,420.5 56,419.4 62,418.2 62,427.7 56,428.9 50,430.1 44,431.2 38,432.3 32,433.3 26,434.3 20,435.3 14,436.2ZM14,449.7 20,448.6 26,447.4 32,446.2 38,445 44,443.8 50,442.5 56,441.2 62,439.8 62,449.4 56,450.8 50,452.2 44,453.5 38,454.7 32,455.9 26,457.1 20,458.3 14,459.4ZM14,473 20,471.7 26,470.4 32,469.1 38,467.7 44,466.2 50,464.8 56,463.2 62,461.6 62,471.4 56,473 50,474.5 44,476 38,477.5 32,478.9 26,480.2 20,481.6 14,482.8ZM14,496.6 20,495.2 26,493.7 32,492.1 38,490.5 44,488.9 50,487.3 56,485.5 62,483.8 62,493.6 56,495.4 50,497.1 44,498.8 38,500.4 32,502 26,503.6 20,505.1 14,506.6ZM14,520.5 20,518.9 26,517.2 32,515.5 38,513.7 44,511.9 50,510 56,508.1 62,506.1 62,516.1 56,518.1 50,520 44,521.9 38,523.7 32,525.5 26,527.2 20,528.9 14,530.6ZM14,544.7 20,542.8 26,541 32,539.1 38,537.1 44,535.1 50,533.1 56,531 62,528.8 62,538.9 56,541.1 50,543.2 44,545.2 38,547.2 32,549.2 26,551.1 20,553 14,554.8ZM14,569.1 20,567.1 26,565 32,562.9 38,560.8 44,558.6 50,556.4 56,554.1 62,551.7 62,561.9 56,564.3 50,566.6 44,568.8 38,571 32,573.2 26,575.3 20,577.3 14,579.4ZM32,587.1 38,584.7 44,582.4 50,579.9 56,577.4 62,574.9 62,585.2 56,587.8 50,590.3 44,592.7 38,595.1 32,597.4Z"/><polygon points="205,21 290,21 320,66 215,66" fill="url(#sheen)"/><rect x="300" y="21" width="700" height="45" fill="url(#mdark)"/><rect x="480" y="21" width="841" height="45" fill="url(#rfade)"/><rect x="1225" y="21" width="96" height="728" fill="url(#rbase)"/><path fill="#103068" fill-opacity=".8" d="M1221,40 1221,75 1221,110 1221,145 1221,180 1220.9,215 1219.3,250 1220.9,250 1222.5,215 1222.6,180 1222.6,145 1222.6,110 1222.6,75 1222.6,40ZM1224.9,40 1224.9,75 1224.9,110 1224.9,145 1224.9,180 1224.8,215 1223.2,250 1218.9,285 1220.6,285 1224.9,250 1226.4,215 1226.5,180 1226.5,145 1226.5,110 1226.5,75 1226.5,40ZM1228.8,40 1228.8,75 1228.8,110 1228.8,145 1228.8,180 1228.7,215 1227.1,250 1222.9,285 1216,320 1217.8,320 1224.6,285 1228.8,250 1230.3,215 1230.4,180 1230.4,145 1230.4,110 1230.4,75 1230.4,40ZM1232.7,40 1232.7,75 1232.7,110 1232.7,145 1232.7,180 1232.6,215 1231.1,250 1226.9,285 1220.2,320 1210.8,355 1212.6,355 1221.9,320 1228.6,285 1232.7,250 1234.2,215 1234.3,180 1234.3,145 1234.3,110 1234.3,75 1234.3,40ZM1236.6,40 1236.6,75 1236.6,110 1236.6,145 1236.6,180 1236.5,215 1235,250 1230.9,285 1224.3,320 1215.1,355 1217,355 1226.1,320 1232.6,285 1236.6,250 1238.1,215 1238.2,180 1238.2,145 1238.2,110 1238.2,75 1238.2,40ZM1240.5,40 1240.5,75 1240.5,110 1240.5,145 1240.5,180 1240.4,215 1238.9,250 1234.9,285 1228.5,320 1219.5,355 1221.3,355 1230.2,320 1236.6,285 1240.6,250 1242,215 1242.1,180 1242.1,145 1242.1,110 1242.1,75 1242.1,40ZM1244.4,40 1244.4,75 1244.4,110 1244.4,145 1244.4,180 1244.3,215 1242.8,250 1238.9,285 1232.6,320 1223.8,355 1212.6,390 1214.5,390 1225.6,355 1234.3,320 1240.6,285 1244.5,250 1245.9,215 1246,180 1246,145 1246,110 1246,75 1246,40ZM1248.3,40 1248.3,75 1248.3,110 1248.3,145 1248.3,180 1248.2,215 1246.8,250 1242.9,285 1236.7,320 1228.1,355 1217.2,390 1219.1,390 1230,355 1238.5,320 1244.6,285 1248.4,250 1249.8,215 1249.9,180 1249.9,145 1249.9,110 1249.9,75 1249.9,40ZM1252.2,40 1252.2,75 1252.2,110 1252.2,145 1252.2,180 1252.1,215 1250.7,250 1246.9,285 1240.9,320 1232.5,355 1221.8,390 1208.7,425 1210.8,425 1223.7,390 1234.3,355 1242.6,320 1248.6,285 1252.3,250 1253.7,215 1253.8,180 1253.8,145 1253.8,110 1253.8,75 1253.8,40ZM1256.1,40 1256.1,75 1256.1,110 1256.1,145 1256.1,180 1256,215 1254.6,250 1250.9,285 1245,320 1236.8,355 1226.4,390 1213.7,425 1215.7,425 1228.3,390 1238.6,355 1246.8,320 1252.6,285 1256.2,250 1257.6,215 1257.7,180 1257.7,145 1257.7,110 1257.7,75 1257.7,40ZM1260,40 1260,75 1260,110 1260,145 1260,180 1259.9,215 1258.5,250 1254.9,285 1249.2,320 1241.2,355 1231,390 1218.6,425 1220.6,425 1232.9,390 1243,355 1250.9,320 1256.6,285 1260.2,250 1261.5,215 1261.6,180 1261.6,145 1261.6,110 1261.6,75 1261.6,40ZM1263.9,40 1263.9,75 1263.9,110 1263.9,145 1263.9,180 1263.8,215 1262.4,250 1258.9,285 1253.3,320 1245.5,355 1235.6,390 1223.5,425 1209.2,460 1211.5,460 1225.5,425 1237.5,390 1247.3,355 1255,320 1260.6,285 1264.1,250 1265.4,215 1265.5,180 1265.5,145 1265.5,110 1265.5,75 1265.5,40ZM1267.8,40 1267.8,75 1267.8,110 1267.8,145 1267.8,180 1267.7,215 1266.4,250 1262.9,285 1257.4,320 1249.8,355 1240.2,390 1228.4,425 1214.5,460 1216.7,460 1230.4,425 1242.1,390 1251.7,355 1259.2,320 1264.6,285 1268,250 1269.3,215 1269.4,180 1269.4,145 1269.4,110 1269.4,75 1269.4,40ZM1271.7,40 1271.7,75 1271.7,110 1271.7,145 1271.7,180 1271.6,215 1270.3,250 1266.9,285 1261.6,320 1254.2,355 1244.7,390 1233.3,425 1219.8,460 1222,460 1235.4,425 1246.7,390 1256,355 1263.3,320 1268.6,285 1271.9,250 1273.2,215 1273.3,180 1273.3,145 1273.3,110 1273.3,75 1273.3,40ZM1275.6,40 1275.6,75 1275.6,110 1275.6,145 1275.6,180 1275.5,215 1274.2,250 1270.9,285 1265.7,320 1258.5,355 1249.3,390 1238.2,425 1225.1,460 1210,495 1212.4,495 1227.3,460 1240.3,425 1251.3,390 1260.3,355 1267.5,320 1272.6,285 1275.9,250 1277.1,215 1277.2,180 1277.2,145 1277.2,110 1277.2,75 1277.2,40ZM1279.5,40 1279.5,75 1279.5,110 1279.5,145 1279.5,180 1279.4,215 1278.1,250 1274.9,285 1269.9,320 1262.8,355 1253.9,390 1243.1,425 1230.4,460 1215.7,495 1218.1,495 1232.6,460 1245.2,425 1255.9,390 1264.7,355 1271.6,320 1276.6,285 1279.8,250 1281,215 1281.1,180 1281.1,145 1281.1,110 1281.1,75 1281.1,40ZM1283.4,40 1283.4,75 1283.4,110 1283.4,145 1283.4,180 1283.3,215 1282,250 1278.9,285 1274,320 1267.2,355 1258.5,390 1248,425 1235.7,460 1221.4,495 1205.4,530 1208,530 1223.8,495 1237.9,460 1250.1,425 1260.5,390 1269,355 1275.7,320 1280.6,285 1283.7,250 1284.9,215 1285,180 1285,145 1285,110 1285,75 1285,40ZM1287.3,40 1287.3,75 1287.3,110 1287.3,145 1287.3,180 1287.2,215 1286,250 1282.9,285 1278.1,320 1271.5,355 1263.1,390 1252.9,425 1240.9,460 1227.2,495 1211.6,530 1214.2,530 1229.6,495 1243.2,460 1255,425 1265.1,390 1273.3,355 1279.9,320 1284.6,285 1287.6,250 1288.8,215 1288.9,180 1288.9,145 1288.9,110 1288.9,75 1288.9,40ZM1291.2,40 1291.2,75 1291.2,110 1291.2,145 1291.2,180 1291.1,215 1289.9,250 1286.9,285 1282.3,320 1275.9,355 1267.7,390 1257.8,425 1246.2,460 1232.9,495 1217.8,530 1220.4,530 1235.3,495 1248.4,460 1259.9,425 1269.6,390 1277.7,355 1284,320 1288.6,285 1291.5,250 1292.7,215 1292.8,180 1292.8,145 1292.8,110 1292.8,75 1292.8,40ZM1295.1,40 1295.1,75 1295.1,110 1295.1,145 1295.1,180 1295,215 1293.8,250 1291,285 1286.4,320 1280.2,355 1272.3,390 1262.7,425 1251.5,460 1238.6,495 1224,530 1207.7,565 1210.6,565 1226.6,530 1241,495 1253.7,460 1264.8,425 1274.2,390 1282,355 1288.2,320 1292.6,285 1295.5,250 1296.6,215 1296.7,180 1296.7,145 1296.7,110 1296.7,75 1296.7,40ZM1299,40 1299,75 1299,110 1299,145 1299,180 1298.9,215 1297.7,250 1295,285 1290.6,320 1284.5,355 1276.9,390 1267.7,425 1256.8,460 1244.3,495 1230.2,530 1214.5,565 1217.3,565 1232.8,530 1246.7,495 1259,460 1269.7,425 1278.8,390 1286.4,355 1292.3,320 1296.6,285 1299.4,250 1300.5,215 1300.6,180 1300.6,145 1300.6,110 1300.6,75 1300.6,40ZM1302.9,40 1302.9,75 1302.9,110 1302.9,145 1302.9,180 1302.8,215 1301.7,250 1299,285 1294.7,320 1288.9,355 1281.5,390 1272.6,425 1262.1,460 1250,495 1236.4,530 1221.2,565 1204.5,600 1207.6,600 1224.1,565 1239,530 1252.4,495 1264.3,460 1274.6,425 1283.4,390 1290.7,355 1296.4,320 1300.6,285 1303.3,250 1304.4,215 1304.5,180 1304.5,145 1304.5,110 1304.5,75 1304.5,40ZM1306.8,40 1306.8,75 1306.8,110 1306.8,145 1306.8,180 1306.7,215 1305.6,250 1303,285 1298.8,320 1293.2,355 1286.1,390 1277.5,425 1267.3,460 1255.7,495 1242.6,530 1228,565 1211.9,600 1215,600 1230.8,565 1245.2,530 1258.1,495 1269.6,460 1279.5,425 1288,390 1295,355 1300.6,320 1304.6,285 1307.2,250 1308.3,215 1308.4,180 1308.4,145 1308.4,110 1308.4,75 1308.4,40ZM1310.7,40 1310.7,75 1310.7,110 1310.7,145 1310.7,180 1310.6,215 1309.5,250 1307,285 1303,320 1297.5,355 1290.7,390 1282.4,425 1272.6,460 1261.4,495 1248.8,530 1234.7,565 1219.2,600 1222.3,600 1237.6,565 1251.4,530 1263.8,495 1274.8,460 1284.4,425 1292.6,390 1299.4,355 1304.7,320 1308.6,285 1311.1,250 1312.2,215 1312.3,180 1312.3,145 1312.3,110 1312.3,75 1312.3,40ZM1314.6,40 1314.6,75 1314.6,110 1314.6,145 1314.6,180 1314.5,215 1313.4,250 1311,285 1307.1,320 1301.9,355 1295.3,390 1287.3,425 1277.9,460 1267.2,495 1255,530 1241.5,565 1226.6,600 1210.3,635 1213.7,635 1229.7,600 1244.3,565 1257.6,530 1269.6,495 1280.1,460 1289.3,425 1297.2,390 1303.7,355 1308.9,320 1312.6,285 1315.1,250 1316.1,215 1316.2,180 1316.2,145 1316.2,110 1316.2,75 1316.2,40ZM1318.5,40 1318.5,75 1318.5,110 1318.5,145 1318.5,180 1318.4,215 1317.3,250 1315,285 1311.3,320 1306.2,355 1299.9,390 1292.2,425 1283.2,460 1272.9,495 1261.2,530 1248.3,565 1234,600 1218.4,635 1221.7,635 1237.1,600 1251.1,565 1263.8,530 1275.3,495 1285.4,460 1294.3,425 1301.8,390 1308,355 1313,320 1316.6,285 1319,250 1320,215 1320.1,180 1320.1,145 1320.1,110 1320.1,75 1320.1,40ZM1322.4,40 1322.4,75 1322.4,110 1322.4,145 1322.4,180 1322.3,215 1321.3,250 1319,285 1315.4,320 1310.6,355 1304.5,390 1297.1,425 1288.5,460 1278.6,495 1267.4,530 1255,565 1241.3,600 1226.4,635 1210.2,670 1213.9,670 1229.8,635 1244.4,600 1257.9,565 1270,530 1281,495 1290.7,460 1299.2,425 1306.4,390 1312.4,355 1317.1,320 1320.6,285 1322.9,250 1323.9,215 1324,180 1324,145 1324,110 1324,75 1324,40ZM1326.3,40 1326.3,75 1326.3,110 1326.3,145 1326.3,180 1326.2,215 1325.2,250 1323,285 1319.5,320 1314.9,355 1309.1,390 1302,425 1293.8,460 1284.3,495 1273.6,530 1261.8,565 1248.7,600 1234.4,635 1218.9,670 1222.6,670 1237.8,635 1251.8,600 1264.6,565 1276.2,530 1286.7,495 1296,460 1304.1,425 1311,390 1316.7,355 1321.3,320 1324.6,285 1326.8,250 1327.8,215 1327.9,180 1327.9,145 1327.9,110 1327.9,75 1327.9,40ZM1329.1,250 1327,285 1323.7,320 1319.2,355 1313.7,390 1306.9,425 1299,460 1290,495 1279.8,530 1268.5,565 1256.1,600 1242.5,635 1227.7,670 1211.8,705 1215.8,705 1231.4,670 1245.8,635 1259.2,600 1271.4,565 1282.5,530 1292.4,495 1301.3,460 1309,425 1315.6,390 1321.1,355 1325.4,320 1328.6,285 1330.8,250ZM1331,285 1327.8,320 1323.6,355 1318.2,390 1311.8,425 1304.3,460 1295.7,495 1286.1,530 1275.3,565 1263.4,600 1250.5,635 1236.5,670 1221.3,705 1205.1,740 1209.5,740 1225.4,705 1240.1,670 1253.9,635 1266.5,600 1278.1,565 1288.7,530 1298.1,495 1306.5,460 1313.9,425 1320.2,390 1325.4,355 1329.6,320 1332.6,285ZM1332,320 1327.9,355 1322.8,390 1316.7,425 1309.6,460 1301.4,495 1292.3,530 1282,565 1270.8,600 1258.5,635 1245.2,670 1230.9,705 1215.5,740 1219.9,740 1234.9,705 1248.9,670 1261.9,635 1273.9,600 1284.9,565 1294.9,530 1303.8,495 1311.8,460 1318.8,425 1324.8,390 1329.7,355 1333.7,320ZM1332.2,355 1327.4,390 1321.6,425 1314.9,460 1307.2,495 1298.5,530 1288.8,565 1278.2,600 1266.6,635 1254,670 1240.4,705 1225.9,740 1230.3,740 1244.4,705 1257.7,670 1269.9,635 1281.3,600 1291.6,565 1301.1,530 1309.6,495 1317.1,460 1323.7,425 1329.4,390 1334.1,355ZM1332,390 1326.6,425 1320.2,460 1312.9,495 1304.7,530 1295.6,565 1285.5,600 1274.6,635 1262.7,670 1250,705 1236.3,740 1240.7,740 1254,705 1266.4,670 1278,635 1288.6,600 1298.4,565 1307.3,530 1315.3,495 1322.4,460 1328.6,425 1334,390ZM1331.5,425 1325.5,460 1318.6,495 1310.9,530 1302.3,565 1292.9,600 1282.6,635 1271.5,670 1259.5,705 1246.7,740 1251.1,740 1263.5,705 1275.2,670 1286,635 1296,600 1305.2,565 1313.5,530 1321,495 1327.7,460 1333.5,425ZM1330.7,460 1324.3,495 1317.1,530 1309.1,565 1300.3,600 1290.7,635 1280.3,670 1269.1,705 1257.1,740 1261.5,740 1273.1,705 1283.9,670 1294,635 1303.4,600 1311.9,565 1319.7,530 1326.7,495 1333,460ZM1330,495 1323.3,530 1315.8,565 1307.6,600 1298.7,635 1289,670 1278.6,705 1267.5,740 1271.8,740 1282.6,705 1292.7,670 1302.1,635 1310.7,600 1318.7,565 1325.9,530 1332.4,495ZM1329.5,530 1322.6,565 1315,600 1306.7,635 1297.8,670 1288.2,705 1277.9,740 1282.2,740 1292.2,705 1301.5,670 1310.1,635 1318.1,600 1325.4,565 1332.1,530ZM1329.3,565 1322.4,600 1314.8,635 1306.5,670 1297.7,705 1288.3,740 1292.6,740 1301.7,705 1310.2,670 1318.1,635 1325.5,600 1332.2,565ZM1329.7,600 1322.8,635 1315.3,670 1307.3,705 1298.6,740 1303,740 1311.3,705 1319,670 1326.2,635 1332.8,600ZM1330.8,635 1324.1,670 1316.8,705 1309,740 1313.4,740 1320.8,705 1327.7,670 1334.2,635ZM1332.8,670 1326.3,705 1319.4,740 1323.8,740 1330.4,705 1336.5,670Z"/><path fill="#1a4484" fill-opacity=".38" d="M142,754 L290.4,710 L341.6,710 L193.1,754ZM255.7,754 L381.4,710 L428.7,710 L302.9,754ZM360.7,754 L461.4,710 L504.5,710 L403.9,754ZM456.6,754 L536.5,710 L575.5,710 L495.7,754ZM543.4,754 L607.7,710 L642.8,710 L578.4,754ZM621.3,754 L674.4,710 L705.7,710 L652.6,754ZM690.9,754 L735.9,710 L763.7,710 L718.7,754ZM752.7,754 L791.8,710 L816.4,710 L777.4,754ZM807.5,754 L842.1,710 L863.9,710 L829.3,754ZM855.9,754 L887.1,710 L906.3,710 L875.1,754ZM898.5,754 L927.1,710 L943.9,710 L915.4,754ZM936,754 L962.4,710 L977.2,710 L950.8,754ZM968.8,754 L993.6,710 L1006.6,710 L981.8,754ZM997.6,754 L1021,710 L1032.4,710 L1008.9,754ZM1022.7,754 L1045.1,710 L1055,710 L1032.6,754ZM1044.7,754 L1066.2,710 L1074.8,710 L1053.3,754ZM1063.9,754 L1084.6,710 L1092.1,710 L1071.4,754ZM1080.6,754 L1100.7,710 L1107.2,710 L1087.1,754ZM1095.1,754 L1114.7,710 L1120.4,710 L1100.8,754ZM1107.8,754 L1126.9,710 L1131.9,710 L1112.8,754ZM1118.8,754 L1137.6,710 L1142.1,710 L1123.3,754ZM1128.8,754 L1147.3,710 L1151.8,710 L1133.3,754ZM1138.8,754 L1156.9,710 L1161.4,710 L1143.3,754ZM1148.8,754 L1166.6,710 L1171.1,710 L1153.3,754ZM1158.8,754 L1176.3,710 L1180.8,710 L1163.3,754ZM1168.8,754 L1186,710 L1190.5,710 L1173.3,754ZM1178.8,754 L1195.7,710 L1200.2,710 L1183.3,754ZM1188.8,754 L1205.5,710 L1210,710 L1193.3,754ZM1198.8,754 L1215.2,710 L1219.7,710 L1203.3,754ZM1208.8,754 L1224.9,710 L1229.4,710 L1213.3,754ZM1218.8,754 L1234.6,710 L1239.1,710 L1223.3,754ZM1228.8,754 L1244.4,710 L1248.9,710 L1233.3,754ZM1238.8,754 L1254.1,710 L1258.6,710 L1243.3,754Z"/><path fill="#1a4484" fill-opacity=".62" d="M-470,754 L-12.6,539 L19.4,539 L-438,754ZM-402,754 L55.4,539 L87.4,539 L-370,754ZM-334,754 L123.4,539 L155.4,539 L-302,754ZM-266,754 L191.4,539 L223.4,539 L-234,754ZM-198,754 L259.4,539 L291.4,539 L-166,754ZM-130,754 L327.4,539 L359.4,539 L-98,754ZM-62,754 L395.4,539 L427.4,539 L-30,754ZM6,754 L463.4,539 L495.4,539 L38,754ZM74,754 L531.4,539 L563.4,539 L106,754Z"/></svg>
  <div id="browser"><div class="pg">
   <div id="toolbar" class="abs"></div>
   <svg class="abs" style="left:50px;top:65px" width="1179" height="29" viewBox="50 65 1179 29" fill="none" stroke-linecap="round" stroke-linejoin="round"><rect x="60.7" y="73.2" width="11.4" height="8.8" rx="1.8" stroke="#cdcdcd" stroke-width="1.25"/><path d="M64.9,73.4 V81.8" stroke="#cdcdcd" stroke-width="1.1"/><path d="M62.2,75.3 H63.5 M62.2,76.9 H63.5 M62.2,78.5 H63.5" stroke="#cdcdcd" stroke-width=".8"/><path d="M76.6,72.5 V83" stroke="#4a4a4a" stroke-width=".8"/><path d="M81.2,76.6 L83.4,78.8 L85.6,76.6" stroke="#e6e6e6" stroke-width="1.5"/><path d="M106.2,73.4 L101.8,77.6 L106.2,81.8" stroke="#dadada" stroke-width="1.6"/><path d="M123.8,73.4 L128.2,77.6 L123.8,81.8" stroke="#6b6b6b" stroke-width="1.6"/><rect x="333.4" y="72.4" width="11.2" height="11.2" rx="2.6" fill="#1f4a5a" stroke="#a4cbd9" stroke-width="1.2"/><path d="M335.6,76 H339 M335.6,78 H340.6 M335.6,80 H338.4" stroke="#d9eef4" stroke-width="1"/><path d="M341,74.4 L338.6,81.8" stroke="#8fc1d0" stroke-width="1"/><path d="M357.6,72.9 H366.6 Q368,72.9 368,74.3 V80.6 Q368,82 366.6,82 H361.4 L359.4,83.2 V82 H357.6 Q356.2,82 356.2,80.6 V74.3 Q356.2,72.9 357.6,72.9Z" fill="#7f9bcd"/><ellipse cx="362.2" cy="77.2" rx="4.2" ry="2.8" fill="#27356a" transform="rotate(-18 362.2 77.2)"/><path d="M358,81.6 H367" stroke="#9a7fd6" stroke-width="1.2"/><path d="M379.4,82.6 L379.2,84.4 L381.6,83.4Z" fill="#1f9d79" stroke="#1f9d79" stroke-width=".8"/><circle cx="384.9" cy="77.9" r="6.2" fill="#1f9d79"/><path d="M388.2,75.9 A3.7,3.7 0 1,0 388.6,78.4 H385.6" stroke="#eafff7" stroke-width="1.5"/><rect x="399.3" y="69.9" width="480" height="16.4" rx="5" fill="#3a3a3a" stroke="#505050" stroke-width="1"/><rect x="403.6" y="74.5" width="7.4" height="3.6" rx="1.2" stroke="#cfcfcf" stroke-width="1.1"/><path d="M403.4,80 H411.2 M404.6,82.2 H410" stroke="#cfcfcf" stroke-width="1.2"/><path d="M853.6,73.8 H857.6 Q859.2,73.8 859.2,75.4 V77.2 Q859.2,78.8 857.6,78.8 H855.6 L854.2,80.2 V78.8 H853.6 Q852.2,78.8 852.2,77.2 V75.4 Q852.2,73.8 853.6,73.8Z" stroke="#d8d8d8" stroke-width="1"/><path d="M854.6,77.6 L855.8,74.9 L857,77.6" stroke="#d8d8d8" stroke-width=".7"/><path d="M858.8,75.8 H863 Q864.4,75.8 864.4,77.2 V79.6 Q864.4,81 863,81 H862.6 V82.4 L861,81 H858.8 Q857.4,81 857.4,79.6 V77.2 Q857.4,75.8 858.8,75.8Z" fill="#ececec" stroke="#3a3a3a" stroke-width=".5"/><path d="M860.2,77.4 H861.8 M861,77.4 V79.6" stroke="#555" stroke-width=".6"/><path d="M875.5,78.6 A3.8,3.8 0 1,1 872.6,74.9" stroke="#d0d0d0" stroke-width="1.2"/><path d="M872,73.4 L873.5,74.9 L871.9,76.2" stroke="#d0d0d0" stroke-width="1"/><path d="M1164.6,76 H1163.4 Q1162.5,76 1162.5,76.9 V82 Q1162.5,82.9 1163.4,82.9 H1170.6 Q1171.5,82.9 1171.5,82 V76.9 Q1171.5,76 1170.6,76 H1169.4" stroke="#d4d4d4" stroke-width="1.2"/><path d="M1167,79.4 V71.9 M1164.9,73.9 L1167,71.8 L1169.1,73.9" stroke="#d4d4d4" stroke-width="1.2"/></svg><span class="t" id="url" style="left:540.3px;top:78.1px;font-size:8.9px;font-weight:400;-webkit-text-stroke:.3px #f2f2f2;color:#f2f2f2">droopler-5.ddev.site/admin/content/marketing-funnel</span>
   <div id="tabs" class="abs">
    <div class="tab on"><svg viewBox="0 0 9 10"><path d="M4.5 .2C5.7 1.8 8.6 3.5 8.6 6.1A4.1 3.9 0 0 1 .4 6.1C.4 3.5 3.3 1.8 4.5 .2Z" fill="#1f93d3"/><path d="M4.5 2.6C5 3.4 6.2 4 6.2 5A1.7 1.6 0 0 1 2.8 5C2.8 4 4 3.4 4.5 2.6Z M4.5 6.3C4.9 6.8 5.8 7.2 5.8 8A1.3 1.2 0 0 1 3.2 8C3.2 7.2 4.1 6.8 4.5 6.3Z" fill="#7fcdf2" opacity=".8"/></svg><span id="tb0">Marketing Funnel |...</span></div>
    <div class="tab"><svg viewBox="0 0 9 10"><path d="M4.5 .2C5.7 1.8 8.6 3.5 8.6 6.1A4.1 3.9 0 0 1 .4 6.1C.4 3.5 3.3 1.8 4.5 .2Z" fill="#1f93d3"/><path d="M4.5 2.6C5 3.4 6.2 4 6.2 5A1.7 1.6 0 0 1 2.8 5C2.8 4 4 3.4 4.5 2.6Z M4.5 6.3C4.9 6.8 5.8 7.2 5.8 8A1.3 1.2 0 0 1 3.2 8C3.2 7.2 4.1 6.8 4.5 6.3Z" fill="#7fcdf2" opacity=".8"/></svg><span id="tb1">Create Blog post |...</span></div>
    <div class="tab"><svg viewBox="0 0 9 10"><path d="M4.5 .2C5.7 1.8 8.6 3.5 8.6 6.1A4.1 3.9 0 0 1 .4 6.1C.4 3.5 3.3 1.8 4.5 .2Z" fill="#1f93d3"/><path d="M4.5 2.6C5 3.4 6.2 4 6.2 5A1.7 1.6 0 0 1 2.8 5C2.8 4 4 3.4 4.5 2.6Z M4.5 6.3C4.9 6.8 5.8 7.2 5.8 8A1.3 1.2 0 0 1 3.2 8C3.2 7.2 4.1 6.8 4.5 6.3Z" fill="#7fcdf2" opacity=".8"/></svg><span id="tb2">Ideal Customer Pro...</span></div>
    <div class="tab"><svg viewBox="0 0 9 10"><path d="M4.5 .2C5.7 1.8 8.6 3.5 8.6 6.1A4.1 3.9 0 0 1 .4 6.1C.4 3.5 3.3 1.8 4.5 .2Z" fill="#1f93d3"/><path d="M4.5 2.6C5 3.4 6.2 4 6.2 5A1.7 1.6 0 0 1 2.8 5C2.8 4 4 3.4 4.5 2.6Z M4.5 6.3C4.9 6.8 5.8 7.2 5.8 8A1.3 1.2 0 0 1 3.2 8C3.2 7.2 4.1 6.8 4.5 6.3Z" fill="#7fcdf2" opacity=".8"/></svg><span id="tb3">Manage form displ...</span></div>
    <div class="tab"><svg viewBox="0 0 9 10"><path d="M4.5 .2C5.7 1.8 8.6 3.5 8.6 6.1A4.1 3.9 0 0 1 .4 6.1C.4 3.5 3.3 1.8 4.5 .2Z" fill="#1f93d3"/><path d="M4.5 2.6C5 3.4 6.2 4 6.2 5A1.7 1.6 0 0 1 2.8 5C2.8 4 4 3.4 4.5 2.6Z M4.5 6.3C4.9 6.8 5.8 7.2 5.8 8A1.3 1.2 0 0 1 3.2 8C3.2 7.2 4.1 6.8 4.5 6.3Z" fill="#7fcdf2" opacity=".8"/></svg><span id="tb4">types | Droopler</span></div>
    <div class="tab"><svg viewBox="0 0 9 10"><path d="M4.5 .2C5.7 1.8 8.6 3.5 8.6 6.1A4.1 3.9 0 0 1 .4 6.1C.4 3.5 3.3 1.8 4.5 .2Z" fill="#1f93d3"/><path d="M4.5 2.6C5 3.4 6.2 4 6.2 5A1.7 1.6 0 0 1 2.8 5C2.8 4 4 3.4 4.5 2.6Z M4.5 6.3C4.9 6.8 5.8 7.2 5.8 8A1.3 1.2 0 0 1 3.2 8C3.2 7.2 4.1 6.8 4.5 6.3Z" fill="#7fcdf2" opacity=".8"/></svg><span id="tb5">Content | Droopler</span></div>
    <div class="tab"><svg viewBox="0 0 9 10"><path d="M4.5 .2C5.7 1.8 8.6 3.5 8.6 6.1A4.1 3.9 0 0 1 .4 6.1C.4 3.5 3.3 1.8 4.5 .2Z" fill="#1f93d3"/><path d="M4.5 2.6C5 3.4 6.2 4 6.2 5A1.7 1.6 0 0 1 2.8 5C2.8 4 4 3.4 4.5 2.6Z M4.5 6.3C4.9 6.8 5.8 7.2 5.8 8A1.3 1.2 0 0 1 3.2 8C3.2 7.2 4.1 6.8 4.5 6.3Z" fill="#7fcdf2" opacity=".8"/></svg><span id="tb6">Marketing Funnel |...</span></div>
    <div class="tab"><svg viewBox="0 0 9 10"><path d="M4.5 .2C5.7 1.8 8.6 3.5 8.6 6.1A4.1 3.9 0 0 1 .4 6.1C.4 3.5 3.3 1.8 4.5 .2Z" fill="#1f93d3"/><path d="M4.5 2.6C5 3.4 6.2 4 6.2 5A1.7 1.6 0 0 1 2.8 5C2.8 4 4 3.4 4.5 2.6Z M4.5 6.3C4.9 6.8 5.8 7.2 5.8 8A1.3 1.2 0 0 1 3.2 8C3.2 7.2 4.1 6.8 4.5 6.3Z" fill="#7fcdf2" opacity=".8"/></svg><span id="tb7">Content | Droopler</span></div>
    <div class="tab"><svg viewBox="0 0 9 10"><path d="M4.5 .2C5.7 1.8 8.6 3.5 8.6 6.1A4.1 3.9 0 0 1 .4 6.1C.4 3.5 3.3 1.8 4.5 .2Z" fill="#1f93d3"/><path d="M4.5 2.6C5 3.4 6.2 4 6.2 5A1.7 1.6 0 0 1 2.8 5C2.8 4 4 3.4 4.5 2.6Z M4.5 6.3C4.9 6.8 5.8 7.2 5.8 8A1.3 1.2 0 0 1 3.2 8C3.2 7.2 4.1 6.8 4.5 6.3Z" fill="#7fcdf2" opacity=".8"/></svg><span id="tb8">Content | Droopler</span></div>
    <div class="tab"><svg viewBox="0 0 9 10"><path d="M4.5 .2C5.7 1.8 8.6 3.5 8.6 6.1A4.1 3.9 0 0 1 .4 6.1C.4 3.5 3.3 1.8 4.5 .2Z" fill="#1f93d3"/><path d="M4.5 2.6C5 3.4 6.2 4 6.2 5A1.7 1.6 0 0 1 2.8 5C2.8 4 4 3.4 4.5 2.6Z M4.5 6.3C4.9 6.8 5.8 7.2 5.8 8A1.3 1.2 0 0 1 3.2 8C3.2 7.2 4.1 6.8 4.5 6.3Z" fill="#7fcdf2" opacity=".8"/></svg><span id="tb9">Content | Droopler</span></div>
    <div class="tab"><svg viewBox="0 0 9 10"><path d="M4.5 .2C5.7 1.8 8.6 3.5 8.6 6.1A4.1 3.9 0 0 1 .4 6.1C.4 3.5 3.3 1.8 4.5 .2Z" fill="#1f93d3"/><path d="M4.5 2.6C5 3.4 6.2 4 6.2 5A1.7 1.6 0 0 1 2.8 5C2.8 4 4 3.4 4.5 2.6Z M4.5 6.3C4.9 6.8 5.8 7.2 5.8 8A1.3 1.2 0 0 1 3.2 8C3.2 7.2 4.1 6.8 4.5 6.3Z" fill="#7fcdf2" opacity=".8"/></svg><span id="tb10">Marketing Funnel |...</span></div>
    <div class="tab" style="justify-content:flex-start;padding-left:16.5px"><svg viewBox="0 0 9 10" style="width:9px;height:9px"><rect x="0" y=".5" width="9" height="9" rx="2" fill="#cfcfcf"/><text x="4.5" y="7.6" font-size="6.5" font-weight="700" text-anchor="middle" fill="#fff" font-family="Liberation Sans, sans-serif">D</text></svg><span id="tb11">Drupal ...</span></div>
   </div>
   <div id="side" class="abs"></div>
   <div id="main" class="abs"></div>
   <svg class="abs" style="left:54px;top:118px" width="30" height="280" viewBox="54 118 30 280" fill="none" stroke="#333336" stroke-width="1.35" stroke-linecap="round" stroke-linejoin="round"><path d="M67.2,126.2 C69.4,129.6 74,132.4 74,137 A6.8,6.6 0 0,1 60.4,137 C60.4,132.4 65,129.6 67.2,126.2Z" stroke="#1b1b1d" stroke-width="1.9"/><path d="M63.2,170.2 H68.6 L71.6,173.4 V179.4 Q71.6,180.5 70.5,180.5 H63.9 Q62.8,180.5 62.8,179.4 V171.3 Q62.8,170.2 63.9,170.2 M68.4,170.4 V173.6 H71.4" stroke="#3b64cc" stroke-width="1.4"/><path d="M67.2,199.4 L73.2,202.4 L67.2,205.4 L61.2,202.4 Z M61.4,205.6 L67.2,208.5 L73,205.6 M61.4,208.8 L67.2,211.7 L73,208.8"/><path d="M63.4,229.9 H71.2 Q71.8,229.9 71.8,230.5 V233.4 H62.8 V230.5 Q62.8,229.9 63.4,229.9 Z M62.8,233.4 Q62.8,236 64.4,237.4 Q65.2,238.2 65.2,239.2 V240 Q65.2,241.4 67.3,241.4 Q69.4,241.4 69.4,240 V239.2 Q69.4,238.2 70.2,237.4 Q71.8,236 71.8,233.4"/><path d="M64.6,262.6 H66.3 Q65.8,260.6 67.7,260.5 Q69.6,260.6 69.1,262.6 H72.4 Q73.2,262.6 73.2,263.4 V265.2 Q71,264.7 70.9,266.6 Q71,268.5 73.2,268 V270.6 Q73.2,271.4 72.4,271.4 H64.6 Q63.8,271.4 63.8,270.6 V268.9 Q61.4,269.4 61.3,267 Q61.4,264.7 63.8,265.2 V263.4 Q63.8,262.6 64.6,262.6Z"/><circle cx="65.4" cy="294.6" r="2.6"/><path d="M61,301 Q61.4,297.9 65.4,297.8 Q69.4,297.9 69.8,301"/><path d="M70,292.2 Q72.6,292.4 72.6,294.7 Q72.6,296.8 70.4,297.2 M71.6,298.2 Q73.8,298.8 74,301"/><path d="M66,320.8 A5.9,5.9 0 1,0 72.6,327.4 H66 Z"/><path d="M68,319.4 A5.6,5.6 0 0,1 73.6,325 H68 Z"/><path d="M67.71,351.34 L68.56,349.86 L70.62,350.72 L70.18,352.36 L71.04,353.22 L72.68,352.78 L73.54,354.84 L72.06,355.69 L72.06,356.91 L73.54,357.76 L72.68,359.82 L71.04,359.38 L70.18,360.24 L70.62,361.88 L68.56,362.74 L67.71,361.26 L66.49,361.26 L65.64,362.74 L63.58,361.88 L64.02,360.24 L63.16,359.38 L61.52,359.82 L60.66,357.76 L62.14,356.91 L62.14,355.69 L60.66,354.84 L61.52,352.78 L63.16,353.22 L64.02,352.36 L63.58,350.72 L65.64,349.86 L66.49,351.34Z" stroke-width="1.25"/><circle cx="67.1" cy="356.3" r="2.1" stroke-width="1.25"/><circle cx="67.1" cy="386.4" r="6.2"/><path d="M65.3,384.7 Q65.4,383 67.1,383 Q68.9,383 68.9,384.6 Q68.9,385.7 67.1,386.5 V387.4" stroke-width="1.2"/><circle cx="67.1" cy="389.4" r=".55" fill="#333336" stroke-width=".5"/></svg>
   <span class="t" id="brand" style="left:83px;top:134.3px;font-size:10.4px;color:#2b2b2b">Drupal</span>
   <a class="t nav on" id="n0" style="top:174.8px">Content</a>
   <a class="t nav" id="n1" style="top:205.3px">Structure</a>
   <a class="t nav" id="n2" style="top:235.6px">Appearance</a>
   <a class="t nav" id="n3" style="top:265.9px">Extend</a>
   <a class="t nav" id="n4" style="top:296.1px">People</a>
   <a class="t nav" id="n5" style="top:326.3px">Reports</a>
   <a class="t nav" id="n6" style="top:356.5px">Configuration</a>
   <a class="t nav" id="n7" style="top:386.7px">Help</a>

   <div class="abs" style="left:57.2px;top:697.5px;width:20px;height:20px;border-radius:50%;border:1px solid #c6c6ca"></div>
   <svg class="abs" style="left:62px;top:702px" width="10" height="11" viewBox="0 0 10 11"><path d="M6,2.6 L3.4,5.5 L6,8.4" fill="none" stroke="#9a9a9e" stroke-width="1.1" stroke-linecap="round" stroke-linejoin="round"/></svg>
   <span class="t" id="cls" style="left:88px;top:707.2px;font-size:9.6px;color:#8a8a8e">Close</span>
   <div class="abs" style="left:235px;top:147px;width:994px;height:1px;background:#ececf1"></div>
   <a class="t crumb" id="c0" style="left:249px;top:129.4px">Back to site</a>
   <div class="abs" style="left:299.6px;top:123.5px;width:1px;height:13px;background:#dcdce2"></div>
   <a class="t crumb" id="c1" style="left:306.6px;top:129.4px">Administration</a>
   <span class="t crumb" style="left:364.4px;top:129.4px;color:#b5b6bd">/</span>
   <a class="t crumb" id="c2" style="left:371.8px;top:129.4px">Content</a>
   <a class="t tool" id="s0" style="left:1012.6px;top:129.6px">Shortcuts</a>
   <a class="t tool" id="s1" style="left:1079px;top:129.6px">Edit</a>
   <a class="t tool" id="s2" style="left:1125.3px;top:129.6px">Go to</a>
   <a class="t tool" id="s3" style="left:1177.5px;top:129.6px">admin</a>
   <svg class="abs" style="left:230px;top:118px" width="960" height="130" viewBox="230 118 960 130" fill="none" stroke="#5d5f67" stroke-width="1.25" stroke-linecap="round" stroke-linejoin="round"><path d="M238.6,125.8 L236.2,128.2 L238.6,130.6 M236.4,128.2 H241.4 Q243.8,128.2 243.8,130.6 V132.4" stroke="#6b6d75"/><path d="M1002.20,124.50 L1003.79,127.62 L1007.24,128.16 L1004.77,130.63 L1005.32,134.09 L1002.20,132.50 L999.08,134.09 L999.63,130.63 L997.16,128.16 L1000.61,127.62Z"/><path d="M1064,134 L1064.6,131.2 L1070.6,125.2 Q1071.4,124.6 1072.2,125.3 Q1073,126.1 1072.3,126.9 L1066.4,132.9 Z"/><circle cx="1114.4" cy="128.4" r="3.5" stroke-width="1.35"/><path d="M1117,131 L1119.4,133.5" stroke-width="1.5"/><circle cx="1167.1" cy="129.3" r="5.5"/><circle cx="1167.1" cy="127.6" r="1.9"/><path d="M1163.5,133.2 Q1164.4,130.9 1167.1,130.9 Q1169.8,130.9 1170.7,133.2"/><path d="M405.50,162.60 L407.20,165.85 L410.83,166.47 L408.26,169.10 L408.79,172.73 L405.50,171.10 L402.21,172.73 L402.74,169.10 L400.17,166.47 L403.80,165.85Z" stroke="#2a2a2d" stroke-width="1.4"/></svg>

   <h1 class="t" id="h1" style="left:234.6px;top:167.4px">Marketing Funnel</h1>
   <div id="pill" class="abs"></div>
   <a class="t ltab" id="l0" style="left:242.5px;top:198.2px">Content</a>
   <a class="t ltab" id="l1" style="left:297.6px;top:198.2px">Blocks</a>
   <a class="t ltab on" id="l2" style="left:346.4px;top:198.2px">Marketing Funnel</a>
   <a class="t ltab" id="l3" style="left:445.3px;top:198.2px">Media</a>
   <a class="t ltab" id="l4" style="left:491.6px;top:198.2px">Templates</a>

   <div id="card" class="abs"></div>
   <div class="abs" style="left:323.5px;top:230.5px;width:184.5px;height:11.2px;background:#c9d9f7"></div>
   <div class="t cap" id="cap1" style="left:250.3px;top:236.2px">Ideal Customer Profile (ICP): <a>Developerzy mieszkaniowi</a></div>
   <span class="t th" id="h10" style="left:260px;top:259.1px">Marketing Funnel</span>
   <span class="t th" id="h11" style="left:480px;top:259.1px">Title</span>
   <span class="t th" id="h12" style="left:879.5px;top:259.1px">Ideal Customer Profile (ICP)</span>
   <span class="t th" id="h13" style="left:1063.7px;top:259.1px">Link to edit Content</span>
   <div class="hl" style="left:250px;top:275px;width:935px"></div>
   <a class="t td" id="r00" style="left:260px;top:293.4px">01. Top of the funnel (TOFU)</a>
<a class="t td" id="r01" style="left:480px;top:293.4px">ABC Automotive bought 10 000 engines from DrooplerEngines</a>
<a class="t td" id="r02" style="left:879.5px;top:293.4px">Developerzy mieszkaniowi</a>
<a class="t td" id="r03" style="left:1063.7px;top:293.4px">edit</a>
<div class="rl" style="left:250px;top:310.7px;width:935px"></div>
<a class="t td" id="r10" style="left:260px;top:328.5px">01. Top of the funnel (TOFU)</a>
<a class="t td" id="r11" style="left:480px;top:328.5px">Centurion V750 is the fastest airplane engine on the planet</a>
<a class="t td" id="r12" style="left:879.5px;top:328.5px">Developerzy mieszkaniowi</a>
<a class="t td" id="r13" style="left:1063.7px;top:328.5px">edit</a>
<div class="rl" style="left:250px;top:345.8px;width:935px"></div>
<a class="t td" id="r20" style="left:260px;top:363.6px">01. Top of the funnel (TOFU)</a>
<a class="t td" id="r21" style="left:480px;top:363.6px">x problmeów z produktem Y</a>
<a class="t td" id="r22" style="left:879.5px;top:363.6px">Developerzy mieszkaniowi</a>
<a class="t td" id="r23" style="left:1063.7px;top:363.6px">edit</a>
<div class="rl" style="left:250px;top:381.0px;width:935px"></div>
<a class="t td" id="r30" style="left:260px;top:398.7px">02. Middle of the funnel (MOFU)</a>
<a class="t td" id="r31" style="left:480px;top:398.7px">Case study 01</a>
<a class="t td" id="r32" style="left:879.5px;top:398.7px">Developerzy mieszkaniowi</a>
<a class="t td" id="r33" style="left:1063.7px;top:398.7px">edit</a>
<div class="rl" style="left:250px;top:416.1px;width:935px"></div>
<a class="t td" id="r40" style="left:260px;top:433.8px">03. Bottom of the funnel (BOFU)</a>
<a class="t td" id="r41" style="left:480px;top:433.8px">Create from template About us - kopia</a>
<a class="t td" id="r42" style="left:879.5px;top:433.8px">Developerzy mieszkaniowi</a>
<a class="t td" id="r43" style="left:1063.7px;top:433.8px">edit</a>
<div class="rl" style="left:250px;top:451.3px;width:935px"></div>

   <div class="t cap" id="cap2" style="left:250.3px;top:469.4px">Ideal Customer Profile (ICP): <a>Małe firmy budowlane</a></div>
   <span class="t th" id="h20" style="left:260px;top:493.1px">Marketing Funnel</span>
   <span class="t th" id="h21" style="left:552.4px;top:493.1px">Title</span>
   <span class="t th" id="h22" style="left:788.6px;top:493.1px">Ideal Customer Profile (ICP)</span>
   <span class="t th" id="h23" style="left:1020.7px;top:493.1px">Link to edit Content</span>
   <div class="hl" style="left:250px;top:508.7px;width:935px"></div>
   <a class="t td" id="r50" style="left:260px;top:526.9px">03. Bottom of the funnel (BOFU)</a>
   <a class="t td" id="r51" style="left:552.4px;top:526.9px">Sidebar Image Paragraph</a>
   <a class="t td" id="r52" style="left:788.6px;top:526.9px">Małe firmy budowlane</a>
   <a class="t td" id="r53" style="left:1020.7px;top:526.9px">edit</a>
   <div class="rl" style="left:250px;top:544.3px;width:935px"></div>
   <svg class="abs" style="left:500px;top:215px" width="700" height="40" viewBox="500 215 700 40" fill="none" stroke-linecap="round" stroke-linejoin="round"><circle cx="1186.6" cy="231" r="9.4" fill="#fff" stroke="#d6d6dc" stroke-width="1"/><path d="M1181.6,228.8 L1179.6,231 L1181.6,233.2" stroke="#8a8c94" stroke-width="1"/><path d="M533.5,231.6 V238.6 L535.3,237 L536.8,240.4 L538,239.9 L536.6,236.6 L538.8,236.4 Z" fill="#0a0a0a" stroke="#fff" stroke-width=".35"/></svg>
  </div></div>
  <svg class="abs" style="left:1175px;top:38px" width="140" height="230" viewBox="1175 38 140 230"><defs>
<clipPath id="wc"><path d="M1184.6,48.2 Q1243,40.6 1302.2,49.2 L1304.6,150 L1304.6,255.6 Q1245,264.4 1185.4,255.8 L1183,200 L1183,110 Z"/></clipPath>
<linearGradient id="wall" x1="0" y1="0" x2="1" y2="0">
<stop offset="0" stop-color="#7d817b"/><stop offset=".05" stop-color="#858983"/><stop offset=".075" stop-color="#dcdfd7"/><stop offset=".095" stop-color="#dcdfd7"/><stop offset=".12" stop-color="#898d87"/>
<stop offset=".2" stop-color="#8f938d"/><stop offset=".24" stop-color="#6f736d"/><stop offset=".275" stop-color="#8b8f88"/><stop offset=".305" stop-color="#d8dbd3"/><stop offset=".33" stop-color="#d8dbd3"/><stop offset=".36" stop-color="#878b85"/>
<stop offset=".42" stop-color="#8f938d"/><stop offset=".455" stop-color="#767a74"/><stop offset=".5" stop-color="#8c908a"/><stop offset=".565" stop-color="#90948e"/><stop offset=".59" stop-color="#e0e3db"/><stop offset=".61" stop-color="#e0e3db"/><stop offset=".64" stop-color="#898d87"/>
<stop offset=".7" stop-color="#8f938d"/><stop offset=".74" stop-color="#7b7f79"/><stop offset=".8" stop-color="#8e928c"/><stop offset=".86" stop-color="#92968f"/><stop offset=".885" stop-color="#e0e3db"/><stop offset=".905" stop-color="#e0e3db"/><stop offset=".935" stop-color="#868a84"/><stop offset="1" stop-color="#7e827c"/>
</linearGradient>
<linearGradient id="lap" x1="0" y1="0" x2="0" y2="1">
<stop offset="0" stop-color="#a6a6aa"/><stop offset=".12" stop-color="#b2b2b6"/><stop offset=".45" stop-color="#c6c6ca"/><stop offset=".72" stop-color="#b9b9c4"/><stop offset=".86" stop-color="#8a8ab2"/><stop offset=".95" stop-color="#4b4c8c"/><stop offset="1" stop-color="#34367a"/>
</linearGradient>
<radialGradient id="face" cx=".5" cy=".45" r=".6"><stop offset="0" stop-color="#d3a797"/><stop offset=".7" stop-color="#c39586"/><stop offset="1" stop-color="#a87d70"/></radialGradient>
<filter id="wb" x="-5%" y="-5%" width="110%" height="110%"><feGaussianBlur stdDeviation=".9"/></filter>
<filter id="wb2" x="-20%" y="-20%" width="140%" height="140%"><feGaussianBlur stdDeviation="1.6"/></filter>
</defs>
<g clip-path="url(#wc)">
<rect x="1180" y="38" width="128" height="160" fill="url(#wall)"/>
<g filter="url(#wb)">
<!-- plant -->
<g fill="#2f4a2c" filter="url(#wb2)">
<ellipse cx="1190" cy="97" rx="6" ry="6"/><ellipse cx="1202" cy="106" rx="9" ry="9"/><ellipse cx="1189" cy="117" rx="7" ry="11"/><ellipse cx="1207" cy="124" rx="9" ry="12"/><ellipse cx="1194" cy="137" rx="10" ry="9"/><ellipse cx="1213" cy="96" rx="4" ry="7"/><ellipse cx="1212" cy="140" rx="6" ry="6"/>
</g>
<g fill="#20351f" filter="url(#wb)"><circle cx="1193" cy="104" r="2.4"/><circle cx="1204" cy="115" r="3"/><circle cx="1188" cy="126" r="2.6"/><circle cx="1199" cy="131" r="3"/><circle cx="1210" cy="110" r="2.2"/><circle cx="1209" cy="134" r="2.6"/><circle cx="1186" cy="140" r="2.4"/></g>
<g fill="#7d9a66" opacity=".75" filter="url(#wb)"><circle cx="1188" cy="108" r="1.7"/><circle cx="1199" cy="121" r="1.8"/><circle cx="1193" cy="134" r="1.6"/><circle cx="1208" cy="102" r="1.6"/><circle cx="1205" cy="141" r="1.5"/><circle cx="1213" cy="123" r="1.5"/><circle cx="1197" cy="98" r="1.4"/><circle cx="1185" cy="120" r="1.4"/></g>
<!-- chair -->
<path d="M1263,109 Q1272,105 1279,110 Q1282,120 1279,133 L1262,133 Z" fill="#121317"/>
<!-- shirt -->
<path d="M1180,200 L1180,154 Q1190,146 1206,139 Q1222,131 1232,130 L1252,130 Q1266,131 1280,138 Q1296,145 1308,156 L1308,200 Z" fill="#272c3c"/>
<path d="M1226,128 L1240,152 L1257,128 L1262,134 L1242,160 L1238,160 L1220,134 Z" fill="#1b1f2c"/>
<rect x="1238" y="152" width="3.6" height="40" fill="#20242f"/>
<!-- neck -->
<path d="M1226,122 L1257,122 L1254,136 L1240,151 L1228,136 Z" fill="#b78a7b"/>
<!-- head -->
<ellipse cx="1240.5" cy="104" rx="23.5" ry="33" fill="#2b2321"/>
<path d="M1218,96 Q1218,83 1228,80.5 Q1240,77.5 1253,80.5 Q1263,83 1263,96 L1263,112 Q1262,128 1251,137 Q1241,143 1231,137 Q1219,128 1218,112 Z" fill="url(#face)"/>
<ellipse cx="1216.6" cy="109" rx="2.6" ry="6" fill="#c09283"/><ellipse cx="1264.6" cy="109" rx="2.6" ry="6" fill="#c09283"/>
<path d="M1217,97 Q1216,75 1232,71.5 Q1241,69.5 1250,71.5 Q1265,75 1264,97 Q1262,86 1255,82.5 Q1241,78.5 1227,82.5 Q1219,86 1217,97 Z" fill="#2a2220"/>
<!-- face features -->
<g filter="url(#wb)">
<ellipse cx="1230.6" cy="106.6" rx="5.4" ry="2.6" fill="#8a5f52" opacity=".75"/><ellipse cx="1251.2" cy="106.6" rx="5.4" ry="2.6" fill="#8a5f52" opacity=".75"/>
<path d="M1225,103.2 Q1230.5,101 1236,103 M1246,103 Q1251.5,101 1257,103.2" stroke="#5d3f36" stroke-width="1.5" fill="none"/>
<path d="M1237.5,116.4 Q1241,118.6 1244.5,116.4" stroke="#8f6153" stroke-width="1.6" fill="none"/>
<ellipse cx="1241" cy="127.6" rx="6.2" ry="2.3" fill="#6e3d3a"/>
<path d="M1221,118 Q1224,132 1234,138 M1261,118 Q1258,132 1248,138" stroke="#9c7266" stroke-width="2.4" fill="none" opacity=".6"/>
</g>
<!-- mic -->
<path d="M1180,150 Q1196,150 1201,166 Q1203,180 1196,192 L1180,192 Z" fill="#14151a"/>
<rect x="1181" y="166" width="6" height="22" fill="#a8a5a2" opacity=".8"/>
</g>
<!-- laptop -->
<rect x="1180" y="190.8" width="128" height="76" fill="url(#lap)"/>
<g fill="#8d8d92" filter="url(#wb)" transform="translate(1240.7,233.4)">
<path d="M0,-4.2 C-1.6,-5.6 -4.2,-5.4 -5.8,-3.6 C-7.6,-1.4 -7.2,2.6 -5.4,5.2 C-4.2,7 -2.8,7.8 -1.4,7.2 C-.4,6.8 .4,6.8 1.4,7.2 C2.8,7.8 4.2,7 5.4,5.2 C6,4.3 6.4,3.5 6.7,2.6 C4.3,1.6 3.9,-1.8 6.2,-3.2 C4.8,-5.2 2,-5.6 0,-4.2 Z"/>
<path d="M.2,-5 C.2,-7 1.6,-8.6 3.6,-8.9 C3.8,-6.9 2.2,-5.1 .2,-5 Z"/>
</g>
</g>
</svg>
  <div id="shade" class="abs"></div>
  <svg class="abs" style="left:1275px;top:650px" width="46" height="50" viewBox="1275 650 46 50">
<g fill="#c3cada" fill-opacity=".88">
<path d="M1284.4,669.6 L1309.6,668 Q1312.2,668 1312.2,670.4 L1312.2,689.6 Q1312.2,692 1309.8,691.9 L1284.6,690.8 Q1282.2,690.6 1282.2,688.4 L1282.2,672 Q1282.2,669.8 1284.4,669.6 Z M1296.4,672.9 C1294.6,676 1291,678.6 1291,681.7 A5.5,5.4 0 0,0 1302,681.7 C1302,678.6 1298.2,676 1296.4,672.9 Z" fill-rule="evenodd"/>
<circle cx="1291.3" cy="663.1" r="2.3"/><circle cx="1302.6" cy="659.8" r="2.5"/>
</g>
<path d="M1291.6,663.4 L1296.4,669 L1302.4,660.2" stroke="#c3cada" stroke-opacity=".88" stroke-width="1.5" fill="none"/>
<path d="M1296.4,672.9 C1294.6,676 1291,678.6 1291,681.7 A5.5,5.4 0 0,0 1302,681.7 C1302,678.6 1298.2,676 1296.4,672.9 Z" fill="#102a5c"/>
<path d="M1295,685 Q1298.6,685.4 1299.8,682.4" stroke="#aeb9cf" stroke-width=".9" fill="none"/>
</svg>
 </div></div>
</div>
<svg class="abs" style="left:0;top:640px" width="1335" height="123" viewBox="0 640 1335 123"><defs><linearGradient id="prog" x1="0" y1="0" x2="1" y2="0"><stop offset="0" stop-color="#ff0a33"/><stop offset=".78" stop-color="#ff0a33"/><stop offset="1" stop-color="#ff2a8c"/></linearGradient></defs>
<rect x="22" y="704.8" width="1295" height="2.9" fill="#fff" fill-opacity=".22"/>
<rect x="1182" y="704.8" width="74" height="2.9" fill="#fff" fill-opacity=".62"/>
<rect x="22" y="704.8" width="1160" height="2.9" fill="url(#prog)"/>
<circle cx="1181.8" cy="706.3" r="6.4" fill="#ff0a33"/>
<g fill="#f1f1f1">
<path d="M38.2,722.6 L53.2,732 L38.2,741.4 Z"/>
<path d="M84,723.6 L96.2,732 L84,740.4 Z"/><rect x="97.2" y="723.6" width="2.9" height="16.8"/>
<path d="M130,728.7 L134.4,728.7 L140,723.4 L140,740.6 L134.4,735.3 L130,735.3 Z"/>
<path d="M141.6,728 Q144.6,729.6 144.6,732 Q144.6,734.4 141.6,736 Z"/>
</g>
<rect x="1033.6" y="726.6" width="31.4" height="10.4" rx="5.2" fill="#fff" fill-opacity=".38"/>
<circle cx="1057.8" cy="731.7" r="8.4" fill="#f1f1f1"/>
<path d="M1055,727.6 L1062,731.7 L1055,735.8 Z" fill="#1a1f2e"/>
<rect x="1090.3" y="723.8" width="21.4" height="16.2" rx="2.6" fill="#f1f1f1"/>
<g fill="none" stroke="#1a1f2e" stroke-width="2.1"><path d="M1099.3,730.2 A2.9,3 0 1,0 1099.3,733.8"/><path d="M1107.3,730.2 A2.9,3 0 1,0 1107.3,733.8"/></g>
<path fill="#f1f1f1" fill-rule="evenodd" d="M1146.76,725.41 L1146.95,722.89 L1150.65,722.89 L1150.84,725.41 L1152.02,725.90 L1153.94,724.25 L1156.55,726.86 L1154.90,728.78 L1155.39,729.96 L1157.91,730.15 L1157.91,733.85 L1155.39,734.04 L1154.90,735.22 L1156.55,737.14 L1153.94,739.75 L1152.02,738.10 L1150.84,738.59 L1150.65,741.11 L1146.95,741.11 L1146.76,738.59 L1145.58,738.10 L1143.66,739.75 L1141.05,737.14 L1142.70,735.22 L1142.21,734.04 L1139.69,733.85 L1139.69,730.15 L1142.21,729.96 L1142.70,728.78 L1141.05,726.86 L1143.66,724.25 L1145.58,725.90Z M1145.60,732.00 a3.20,3.20 0 1,0 6.40,0 a3.20,3.20 0 1,0 -6.40,0Z"/>
<g fill="none" stroke="#f1f1f1" stroke-width="2">
<rect x="1186.2" y="723.4" width="21.6" height="17.2" rx="1.4"/>
<rect x="1234" y="725.2" width="22" height="13.8"/>
<path d="M1284.4,728.6 V723.5 H1289.6 M1296.4,723.5 H1301.7 V728.6 M1301.7,735.4 V740.5 H1296.4 M1289.6,740.5 H1284.4 V735.4" stroke-width="2.2"/>
</g>
<rect x="1196" y="731" width="9.4" height="6.7" fill="#f1f1f1"/>
</svg>
<span class="t" id="time">27:13 / 30:22</span>
</body>
</html>
